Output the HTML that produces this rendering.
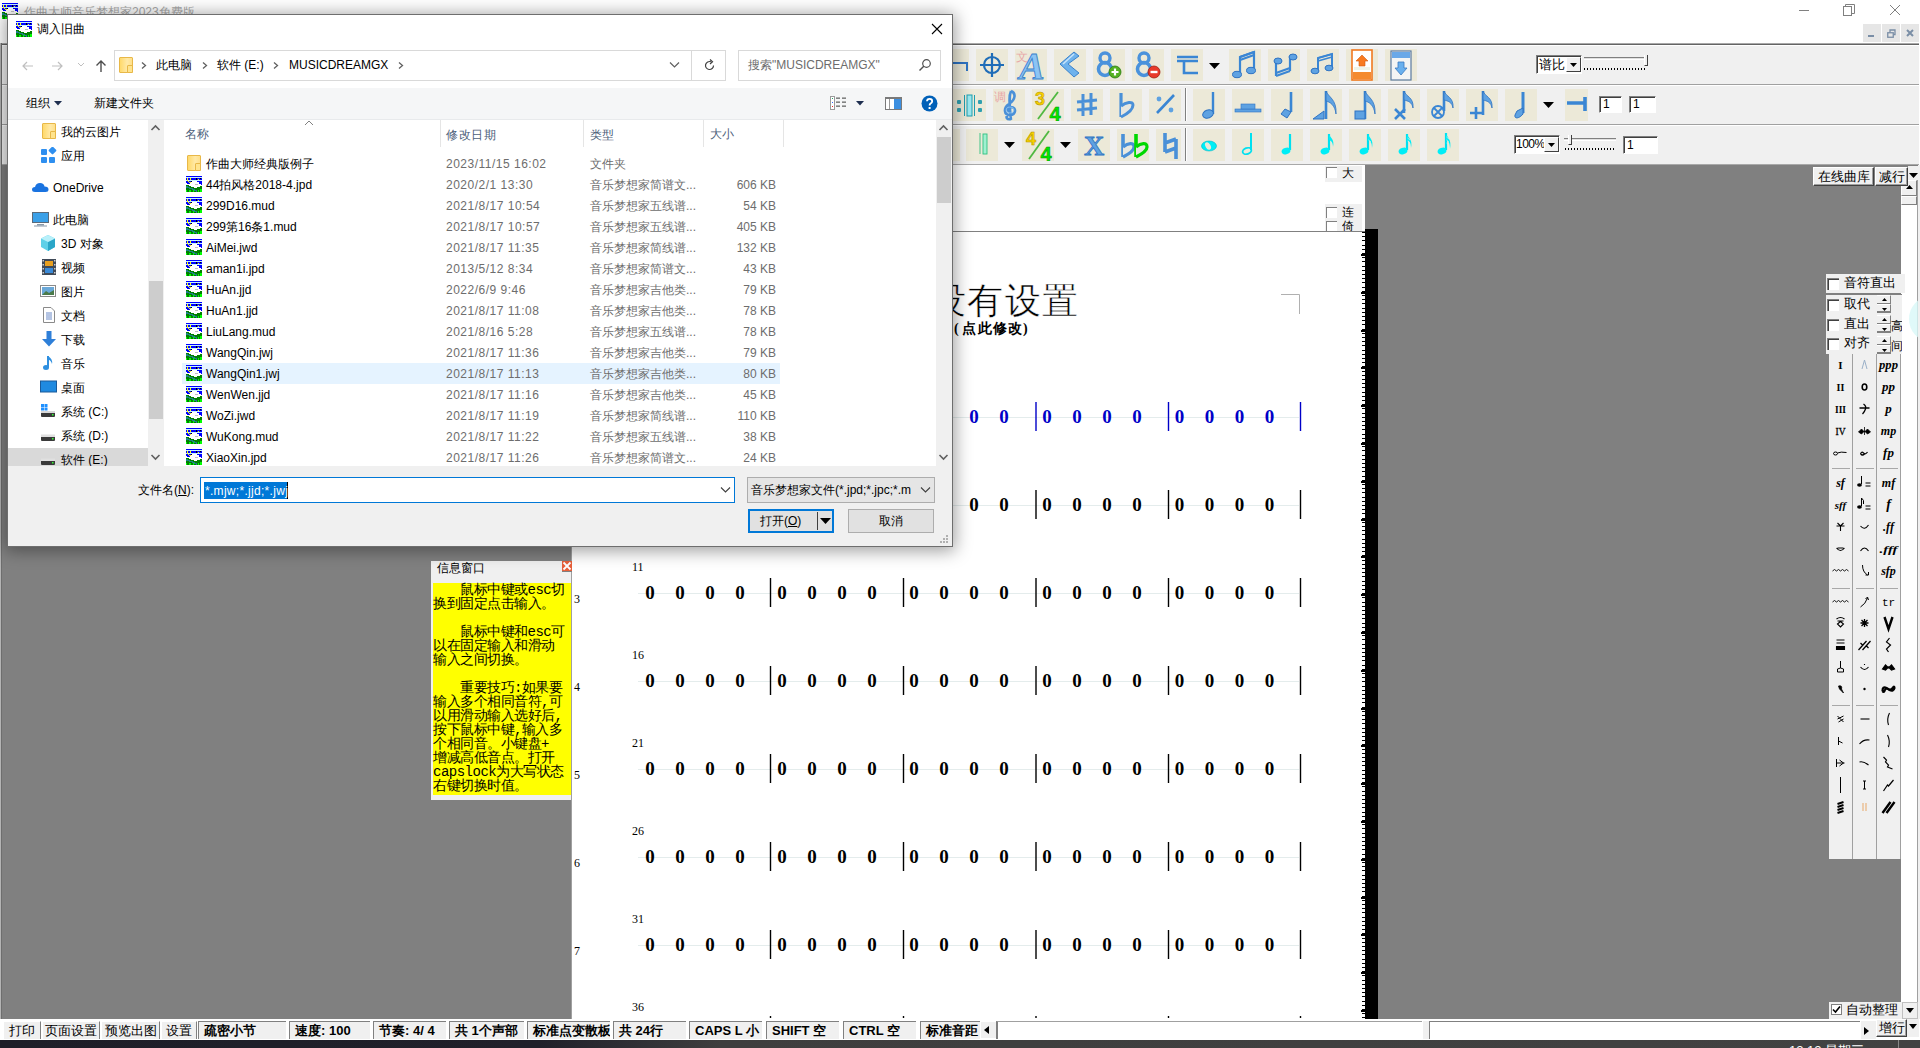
<!DOCTYPE html>
<html><head><meta charset="utf-8">
<style>
*{margin:0;padding:0;box-sizing:border-box}
body{width:1920px;height:1048px;overflow:hidden;position:relative;background:#fff;font-family:"Liberation Sans",sans-serif;color:#000}
.a{position:absolute}
.folder{width:14px;height:16px;background:linear-gradient(90deg,#ffd96a,#ffe9a8 60%,#ffe08a);border:1px solid #e8b848;border-radius:1px}.folder::after{content:"";position:absolute;right:-1px;bottom:-1px;width:4px;height:6px;background:#ffe48e;border:1px solid #e8b848;border-radius:1px}
.tb{position:absolute;width:32px;height:32px;background:#ece9d8}
</style></head><body>

<!-- APP TITLE BAR -->
<div class="a" style="left:0;top:0;width:1920px;height:43px;background:#fff"></div>
<div class="a" id="title" style="left:24px;top:4px;font-size:12px;line-height:16px;color:#a8a8a8;white-space:nowrap">作曲大师音乐梦想家2023免费版</div>

<!-- TOOLBAR -->
<div class="a" style="left:0;top:43px;width:1919px;height:122px;background:#f0f0f0"></div>
<div class="a" style="left:0;top:43px;width:1919px;height:1px;background:#a8a8a8"></div>
<div class="a" style="left:0;top:44px;width:1919px;height:1px;background:#646464"></div>
<div class="a" style="left:0;top:45px;width:1919px;height:1px;background:#fff"></div>
<div class="a" style="left:0;top:84px;width:1919px;height:1px;background:#a0a0a0"></div>
<div class="a" style="left:0;top:85px;width:1919px;height:1px;background:#fff"></div>
<div class="a" style="left:0;top:124px;width:1919px;height:1px;background:#a0a0a0"></div>
<div class="a" style="left:0;top:125px;width:1919px;height:1px;background:#fff"></div>
<div class="a" style="left:0;top:164px;width:1919px;height:1px;background:#a8a8a8"></div>

<!--TOOLBAR-START-->
<div class="a" style="left:0;top:0px;width:1920px;height:0">
<div class="tb" style="left:952px;top:49px;width:17px"><svg width="17" height="32"><path d="M0 14H15V22" stroke="#2f73c2" stroke-width="2" fill="none"/></svg></div>
<div class="tb" style="left:976px;top:49px;width:32px"><svg width="32" height="32" viewBox="0 0 32 32"><circle cx="16" cy="16" r="8" stroke="#1f6db8" stroke-width="2.2" fill="none"/><path d="M16 4V28M4 16H28" stroke="#1f6db8" stroke-width="2.2"/></svg></div>
<div class="tb" style="left:1015px;top:49px;width:32px"><svg width="32" height="32" viewBox="0 0 32 32"><text x="1" y="12" font-family="Liberation Serif, serif" font-size="12" fill="#e8a8a8">文</text><text x="17" y="30" text-anchor="middle" font-family="Liberation Serif, serif" font-size="38" font-style="italic" font-weight="bold" fill="#8cc4f4" stroke="#3a82cc" stroke-width="0.9">A</text></svg></div>
<div class="tb" style="left:1054px;top:49px;width:32px"><svg width="32" height="32" viewBox="0 0 32 32"><path d="M20 3L6 15L20 28L25 24L14 15L25 7Z" fill="#6eb2ec" stroke="#3a82cc" stroke-width="1"/><path d="M20 5L9 15" stroke="#c8e4fa" stroke-width="1.5"/></svg></div>
<div class="tb" style="left:1093px;top:49px;width:32px"><svg width="32" height="32" viewBox="0 0 32 32"><circle cx="12" cy="9" r="5" stroke="#4a92dc" stroke-width="3.4" fill="none"/><circle cx="12" cy="20" r="6.5" stroke="#4a92dc" stroke-width="3.6" fill="none"/><circle cx="22" cy="23" r="6" fill="#55b020" stroke="#2a7a10" stroke-width="0.8"/><path d="M22 19.5V26.5M18.5 23H25.5" stroke="#fff" stroke-width="2.2"/></svg></div>
<div class="tb" style="left:1132px;top:49px;width:32px"><svg width="32" height="32" viewBox="0 0 32 32"><circle cx="12" cy="9" r="5" stroke="#4a92dc" stroke-width="3.4" fill="none"/><circle cx="12" cy="20" r="6.5" stroke="#4a92dc" stroke-width="3.6" fill="none"/><circle cx="22" cy="23" r="6" fill="#e83a2a" stroke="#a02010" stroke-width="0.8"/><path d="M18.5 23H25.5" stroke="#fff" stroke-width="2.4"/></svg></div>
<div class="tb" style="left:1171px;top:49px;width:32px"><svg width="32" height="32" viewBox="0 0 32 32"><path d="M6 8H27M6 12H27M13 12V24H27" stroke="#3a86d4" stroke-width="2.6" fill="none"/></svg></div>
<div class="tb" style="left:1229px;top:49px;width:32px"><svg width="32" height="32" viewBox="0 0 32 32"><path d="M11 25V8L25 3V21" stroke="#3a86d4" stroke-width="2.2" fill="none"/><path d="M11 8L25 3M11 11L25 6" stroke="#3a86d4" stroke-width="2.2"/><ellipse cx="8" cy="25.5" rx="4.5" ry="3.2" fill="#5ea2e2" stroke="#2f73c2"/><ellipse cx="22" cy="21.5" rx="4.5" ry="3.2" fill="#5ea2e2" stroke="#2f73c2"/></svg></div>
<div class="tb" style="left:1268px;top:49px;width:32px"><svg width="32" height="32" viewBox="0 0 32 32"><path d="M8 27V12M22 22V7" stroke="#3a86d4" stroke-width="2.2"/><path d="M8 27L22 22M8 24L22 19" stroke="#3a86d4" stroke-width="2.2"/><ellipse cx="10" cy="12" rx="4" ry="3" fill="#5ea2e2" stroke="#2f73c2"/><ellipse cx="25" cy="8" rx="4" ry="3" fill="#5ea2e2" stroke="#2f73c2"/></svg></div>
<div class="tb" style="left:1307px;top:49px;width:32px"><svg width="32" height="32" viewBox="0 0 32 32"><path d="M11 22V9L25 5V19" stroke="#3a86d4" stroke-width="2" fill="none"/><path d="M11 9L25 5M11 12L25 8" stroke="#3a86d4" stroke-width="1.8"/><ellipse cx="8" cy="22" rx="4" ry="2.8" fill="#5ea2e2" stroke="#2f73c2"/><ellipse cx="22" cy="19" rx="4" ry="2.8" fill="#5ea2e2" stroke="#2f73c2"/></svg></div>
<div class="tb" style="left:1346px;top:49px;width:32px"><svg width="32" height="32" viewBox="0 0 32 32"><rect x="6" y="1" width="20" height="30" fill="#fff" stroke="#f07820" stroke-width="1.6"/><rect x="7" y="23" width="18" height="7" fill="#f58a30"/><path d="M16 6L22 12H19V17H13V12H10Z" fill="#f87a20" stroke="#d05a10" stroke-width="0.6"/><rect x="8" y="18" width="16" height="3" fill="#e8f0e0" opacity="0.7"/></svg></div>
<div class="tb" style="left:1385px;top:49px;width:32px"><svg width="32" height="32" viewBox="0 0 32 32"><rect x="6" y="2" width="20" height="29" fill="#f4f4f4" stroke="#5a7aa0" stroke-width="1.2"/><rect x="7" y="3" width="18" height="6" fill="#6aa8e8"/><path d="M13 13H19V19H22L16 26L10 19H13Z" fill="#6ab0ee" stroke="#3a7ac0" stroke-width="0.8"/></svg></div>
<svg class="a" style="left:1209px;top:63px" width="11" height="6" viewBox="0 0 11 6"><path d="M0 0H11L5.5 6Z" fill="#000"/></svg>
<div class="a" style="left:1536px;top:55px;width:46px;height:19px;background:#fff;border-top:1px solid #808080;border-left:1px solid #808080;border-right:1px solid #fff;border-bottom:1px solid #fff;box-shadow:inset 1px 1px 0 #404040"></div>
<div class="a" style="left:1539px;top:56px;font-size:13px;line-height:17px;white-space:nowrap">谱比</div>
<div class="a" style="left:1566px;top:57px;width:15px;height:15px;background:#f0f0f0;border-top:1px solid #fff;border-left:1px solid #fff;border-right:1px solid #404040;border-bottom:1px solid #404040"></div>
<svg class="a" style="left:1570px;top:63px" width="7" height="4"><path d="M0 0H7L3.5 4Z" fill="#000"/></svg>
<div class="a" style="left:1584px;top:57px;width:62px;height:3px;border-top:1px solid #808080;border-bottom:1px solid #fff;background:#e0e0e0"></div>
<div class="a" style="left:1584px;top:68px;width:62px;height:2px;background:repeating-linear-gradient(90deg,#000 0 1px,transparent 1px 3px)"></div>
<div class="a" style="left:1644px;top:55px;width:4px;height:11px;background:#f0f0f0;border-right:1px solid #404040;border-bottom:1px solid #404040;border-left:1px solid #fff"></div>
<div class="tb" style="left:952px;top:89px;width:34px"><svg width="34" height="32" viewBox="-2 0 34 32"><rect x="13" y="6" width="5" height="21" fill="#9be8f0" stroke="#20a0b0"/><path d="M10.5 6V27M20.5 6V27" stroke="#20a0b0" stroke-width="1"/><rect x="3" y="11" width="4" height="4" rx="1" fill="#30a0b0"/><rect x="3" y="19" width="4" height="4" rx="1" fill="#30a0b0"/><rect x="24" y="11" width="4" height="4" rx="1" fill="#30a0b0"/><rect x="24" y="19" width="4" height="4" rx="1" fill="#30a0b0"/></svg></div>
<div class="tb" style="left:993px;top:89px;width:32px"><svg width="32" height="32" viewBox="0 0 32 32"><text x="1" y="12" font-family="Liberation Serif, serif" font-size="12" fill="#e8a8a8">调</text><path d="M18 30C14 31 12 28 15 26M18 2C23 4 23 10 16 15C10 19 11 26 17 26C23 26 24 18 18 18C14 18 14 22 17 23M18 2C16 6 16 12 18 31" stroke="#4a90d8" stroke-width="2.6" fill="none"/><ellipse cx="17" cy="21" rx="4" ry="3" fill="none" stroke="#8cc4f4" stroke-width="0.8"/></svg></div>
<div class="tb" style="left:1032px;top:89px;width:32px"><svg width="32" height="32" viewBox="0 0 32 32"><text x="8" y="16" text-anchor="middle" font-family="Liberation Sans, sans-serif" font-weight="bold" font-size="18" fill="#f8d000" stroke="#b09000" stroke-width="0.5">3</text><path d="M6 30L26 3" stroke="#50b840" stroke-width="1.8"/><text x="23" y="32" text-anchor="middle" font-family="Liberation Sans, sans-serif" font-weight="bold" font-size="20" fill="#00e800" stroke="#009000" stroke-width="0.5">4</text></svg></div>
<div class="tb" style="left:1071px;top:89px;width:32px"><svg width="32" height="32" viewBox="0 0 32 32"><path d="M12 5V27M20 4V26M6 13L26 11M6 21L26 19" stroke="#4a90d8" stroke-width="3"/></svg></div>
<div class="tb" style="left:1110px;top:89px;width:32px"><svg width="32" height="32" viewBox="0 0 32 32"><path d="M11 4V28" stroke="#4a90d8" stroke-width="3.2"/><path d="M11 28C17 25 23 21 23 16C23 12 16 13 11 17" stroke="#4a90d8" stroke-width="3" fill="#e8e8e0"/></svg></div>
<div class="tb" style="left:1149px;top:89px;width:32px"><svg width="32" height="32" viewBox="0 0 32 32"><path d="M8 24L25 6" stroke="#3a86d4" stroke-width="2.6"/><circle cx="10" cy="10" r="2.4" fill="#5ea2e2"/><circle cx="22" cy="21" r="2.4" fill="#5ea2e2"/></svg></div>
<div class="tb" style="left:1193px;top:89px;width:32px"><svg width="32" height="32" viewBox="0 0 32 32"><path d="M20 3V25" stroke="#3a86d4" stroke-width="2.4"/><ellipse cx="15" cy="25" rx="5.5" ry="4" fill="#5ea2e2" stroke="#2f73c2" transform="rotate(-20 15 25)"/></svg></div>
<div class="tb" style="left:1232px;top:89px;width:32px"><svg width="32" height="32" viewBox="0 0 32 32"><rect x="3" y="20" width="26" height="3" fill="#5ea2e2" stroke="#2f73c2" stroke-width="0.6"/><rect x="9" y="15" width="14" height="5" fill="#5ea2e2" stroke="#2f73c2" stroke-width="0.6"/></svg></div>
<div class="tb" style="left:1271px;top:89px;width:32px"><svg width="32" height="32" viewBox="0 0 32 32"><path d="M20 3V23" stroke="#3a86d4" stroke-width="2.6"/><path d="M14 20L20 23L16 29L10 25Z" fill="#5ea2e2" stroke="#2f73c2"/></svg></div>
<div class="tb" style="left:1310px;top:89px;width:32px"><svg width="32" height="32" viewBox="0 0 32 32"><path d="M16 2V30" stroke="#3a86d4" stroke-width="2.6"/><path d="M16 2C18 8 27 10 26 25C25 16 20 13 16 12Z" fill="#5ea2e2" stroke="#2f73c2" stroke-width="0.8"/><path d="M3 30L14 22V30Z" fill="#5ea2e2" stroke="#2f73c2"/></svg></div>
<div class="tb" style="left:1349px;top:89px;width:32px"><svg width="32" height="32" viewBox="0 0 32 32"><path d="M16 2V30" stroke="#3a86d4" stroke-width="2.6"/><path d="M16 2C18 8 27 10 26 25C25 16 20 13 16 12Z" fill="#5ea2e2" stroke="#2f73c2" stroke-width="0.8"/><rect x="6" y="22" width="10" height="8" fill="#5ea2e2" stroke="#2f73c2"/></svg></div>
<div class="tb" style="left:1388px;top:89px;width:32px"><svg width="32" height="32" viewBox="0 0 32 32"><path d="M16 2V24" stroke="#3a86d4" stroke-width="2.6"/><path d="M16 2C18 8 26 8 25 19C24 13 20 12 16 11Z" fill="#5ea2e2" stroke="#2f73c2" stroke-width="0.8"/><path d="M7 20L17 30M17 20L7 30" stroke="#3a86d4" stroke-width="2.6"/></svg></div>
<div class="tb" style="left:1427px;top:89px;width:32px"><svg width="32" height="32" viewBox="0 0 32 32"><path d="M17 2V22" stroke="#3a86d4" stroke-width="2.6"/><path d="M17 2C19 8 27 8 26 19C25 13 21 12 17 11Z" fill="#5ea2e2" stroke="#2f73c2" stroke-width="0.8"/><circle cx="11" cy="23" r="6" fill="none" stroke="#3a86d4" stroke-width="1.8"/><path d="M7 19L15 27M15 19L7 27" stroke="#3a86d4" stroke-width="1.8"/></svg></div>
<div class="tb" style="left:1466px;top:89px;width:32px"><svg width="32" height="32" viewBox="0 0 32 32"><path d="M17 2V26" stroke="#3a86d4" stroke-width="2.6"/><path d="M17 2C19 8 27 8 26 19C25 13 21 12 17 11Z" fill="#5ea2e2" stroke="#2f73c2" stroke-width="0.8"/><path d="M4 24H16M10 18V30" stroke="#3a86d4" stroke-width="2.6"/></svg></div>
<div class="tb" style="left:1505px;top:89px;width:32px"><svg width="32" height="32" viewBox="0 0 32 32"><path d="M18 3V24" stroke="#3a86d4" stroke-width="3"/><path d="M18 19L18 25C14 30 9 30 10 26L12 22Z" fill="#5ea2e2" stroke="#2f73c2"/></svg></div>
<div class="a" style="left:1185px;top:88px;width:1px;height:33px;background:#808080;box-shadow:1px 0 0 #fff"></div>
<svg class="a" style="left:1543px;top:102px" width="11" height="6" viewBox="0 0 11 6"><path d="M0 0H11L5.5 6Z" fill="#000"/></svg>
<div class="tb" style="left:1565px;top:89px;width:23px"><svg width="23" height="32" viewBox="0 0 23 32"><path d="M2 14H20M20 8V22" stroke="#3a86d4" stroke-width="3.6"/></svg></div>
<div class="a" style="left:1599px;top:96px;width:23px;height:17px;background:#fff;border-top:1px solid #808080;border-left:1px solid #808080;border-right:1px solid #fff;border-bottom:1px solid #fff;box-shadow:inset 1px 1px 0 #404040;font-size:12px;line-height:15px;padding-left:3px">1</div>
<div class="a" style="left:1629px;top:96px;width:27px;height:17px;background:#fff;border-top:1px solid #808080;border-left:1px solid #808080;border-right:1px solid #fff;border-bottom:1px solid #fff;box-shadow:inset 1px 1px 0 #404040;font-size:12px;line-height:15px;padding-left:3px">1</div>
<div class="tb" style="left:952px;top:129px;width:8px"></div>
<div class="tb" style="left:966px;top:129px;width:32px"><svg width="32" height="32" viewBox="0 0 32 32"><path d="M14 4V25" stroke="#30c080" stroke-width="0.9"/><rect x="17" y="5" width="4" height="20" fill="#a0f0d0" stroke="#30c080" stroke-width="0.9"/></svg></div>
<div class="tb" style="left:1022px;top:129px;width:32px"><svg width="32" height="32" viewBox="0 0 32 32"><text x="9" y="16" text-anchor="middle" font-family="Liberation Sans, sans-serif" font-weight="bold" font-size="18" fill="#f8d000" stroke="#b09000" stroke-width="0.5">4</text><path d="M7 30L27 2" stroke="#50b840" stroke-width="1.8"/><text x="24" y="32" text-anchor="middle" font-family="Liberation Sans, sans-serif" font-weight="bold" font-size="20" fill="#00e800" stroke="#009000" stroke-width="0.5">4</text></svg></div>
<div class="tb" style="left:1078px;top:129px;width:32px"><svg width="32" height="32" viewBox="0 0 32 32"><text x="16" y="26" text-anchor="middle" font-family="Liberation Serif, serif" font-weight="bold" font-size="28" fill="#5ea2e2" stroke="#2f73c2" stroke-width="0.8">X</text></svg></div>
<div class="tb" style="left:1117px;top:129px;width:32px"><svg width="32" height="32" viewBox="0 0 32 32"><path d="M6 5V28" stroke="#4a90d8" stroke-width="3.6"/><path d="M6 28C12 25 17 22 17 18C17 13 11 14 6 18" stroke="#4a90d8" stroke-width="3.2" fill="#e8e8e0"/><path d="M19 5V28" stroke="#00d800" stroke-width="3.6"/><path d="M19 28C25 25 30 22 30 18C30 13 24 14 19 18" stroke="#00d800" stroke-width="3.2" fill="#e8e8e0"/></svg></div>
<div class="tb" style="left:1193px;top:129px;width:32px"><svg width="32" height="32" viewBox="0 0 32 32"><ellipse cx="16" cy="17" rx="7.5" ry="5" fill="#00eef6" stroke="#00b8c8" stroke-width="0.6"/><ellipse cx="15" cy="17" rx="2.5" ry="4" fill="#ece9d8" transform="rotate(-30 15 17)"/></svg></div>
<div class="tb" style="left:1232px;top:129px;width:32px"><svg width="32" height="32" viewBox="0 0 32 32"><path d="M19 4V21" stroke="#00e0f0" stroke-width="2"/><ellipse cx="15" cy="22" rx="4.5" ry="3" fill="none" stroke="#00e0f0" stroke-width="1.8" transform="rotate(-20 15 22)"/></svg></div>
<div class="tb" style="left:1271px;top:129px;width:32px"><svg width="32" height="32" viewBox="0 0 32 32"><path d="M19 5V21" stroke="#00e0f0" stroke-width="2.2"/><ellipse cx="15" cy="22" rx="4.5" ry="3.3" fill="#00eef6" transform="rotate(-20 15 22)"/></svg></div>
<div class="tb" style="left:1310px;top:129px;width:32px"><svg width="32" height="32" viewBox="0 0 32 32"><path d="M19 5V21" stroke="#00e0f0" stroke-width="2.2"/><path d="M19 5C20 9 25 10 23 18C23 13 21 12 19 11Z" fill="#00eef6"/><ellipse cx="15" cy="22" rx="4.5" ry="3.3" fill="#00eef6" transform="rotate(-20 15 22)"/></svg></div>
<div class="tb" style="left:1349px;top:129px;width:32px"><svg width="32" height="32" viewBox="0 0 32 32"><path d="M19 5V21" stroke="#00e0f0" stroke-width="2.2"/><path d="M19 5C20 9 25 10 23 19C23 13 21 12 19 11Z" fill="#00eef6"/><path d="M19.5 11L22 13" stroke="#ece9d8" stroke-width="0.8"/><ellipse cx="15" cy="22" rx="4.5" ry="3.3" fill="#00eef6" transform="rotate(-20 15 22)"/></svg></div>
<div class="tb" style="left:1388px;top:129px;width:32px"><svg width="32" height="32" viewBox="0 0 32 32"><path d="M19 5V21" stroke="#00e0f0" stroke-width="2.2"/><path d="M19 5C20 9 25 10 23 19C23 13 21 12 19 11Z" fill="#00eef6"/><path d="M19.5 9L22 11M19.5 12L22 14" stroke="#ece9d8" stroke-width="0.7"/><ellipse cx="15" cy="22" rx="4.5" ry="3.3" fill="#00eef6" transform="rotate(-20 15 22)"/></svg></div>
<div class="tb" style="left:1427px;top:129px;width:32px"><svg width="32" height="32" viewBox="0 0 32 32"><path d="M19 4V21" stroke="#00e0f0" stroke-width="2.2"/><path d="M19 4C20 9 25 10 23 20C23 13 21 12 19 11Z" fill="#00eef6"/><path d="M19.5 8L22 10M19.5 11L22 13M19.5 14L22 16" stroke="#ece9d8" stroke-width="0.7"/><ellipse cx="15" cy="22" rx="4.5" ry="3.3" fill="#00eef6" transform="rotate(-20 15 22)"/></svg></div>
<div class="tb" style="left:1156px;top:129px;width:25px"><svg width="25" height="32" viewBox="0 0 25 32"><path d="M9 4V23M20 10V30M9 23L20 19M9 14L20 10" stroke="#4a90d8" stroke-width="3.6"/></svg></div>
<svg class="a" style="left:1004px;top:142px" width="11" height="6" viewBox="0 0 11 6"><path d="M0 0H11L5.5 6Z" fill="#000"/></svg>
<svg class="a" style="left:1060px;top:142px" width="11" height="6" viewBox="0 0 11 6"><path d="M0 0H11L5.5 6Z" fill="#000"/></svg>
<div class="a" style="left:1185px;top:128px;width:1px;height:33px;background:#808080;box-shadow:1px 0 0 #fff"></div>
<div class="a" style="left:1514px;top:135px;width:46px;height:19px;background:#fff;border-top:1px solid #808080;border-left:1px solid #808080;border-right:1px solid #fff;border-bottom:1px solid #fff;box-shadow:inset 1px 1px 0 #404040"></div>
<div class="a" style="left:1516px;top:136px;font-size:12px;line-height:17px;white-space:nowrap;letter-spacing:-0.5px">100%</div>
<div class="a" style="left:1544px;top:137px;width:15px;height:15px;background:#f0f0f0;border-top:1px solid #fff;border-left:1px solid #fff;border-right:1px solid #404040;border-bottom:1px solid #404040"></div>
<svg class="a" style="left:1548px;top:143px" width="7" height="4"><path d="M0 0H7L3.5 4Z" fill="#000"/></svg>
<div class="a" style="left:1564px;top:138px;width:52px;height:3px;border-top:1px solid #808080;border-bottom:1px solid #fff;background:#e0e0e0"></div>
<div class="a" style="left:1565px;top:148px;width:51px;height:2px;background:repeating-linear-gradient(90deg,#000 0 1px,transparent 1px 3px)"></div>
<div class="a" style="left:1568px;top:135px;width:4px;height:10px;background:#f0f0f0;border-right:1px solid #404040;border-bottom:1px solid #404040;border-left:1px solid #fff"></div>
<div class="a" style="left:1623px;top:136px;width:35px;height:18px;background:#fff;border-top:1px solid #808080;border-left:1px solid #808080;border-right:1px solid #fff;border-bottom:1px solid #fff;box-shadow:inset 1px 1px 0 #404040;font-size:12px;line-height:16px;padding-left:3px">1</div>
</div>
<svg class="a" style="left:2px;top:3px" width="16" height="16" viewBox="0 0 16 16" shape-rendering="crispEdges"><rect width="16" height="16" fill="#fff"/><rect y="0" width="16" height="1" fill="#0000ff"/><rect y="1" width="16" height="1" fill="#c8f4ff"/><rect y="2" width="16" height="2" fill="#0000ff"/><rect y="4" width="16" height="1" fill="#c8f4ff"/><path d="M0 5H5V7H4V8H1V7H0Z" fill="#0000ff"/><path d="M11 5H16V9H15V8H13V6H11Z" fill="#0000ff"/><path d="M1 2H2V5H1ZM4 2H5V4H4ZM2 5H3V6H2ZM12 3H13V4H12ZM3 6H5V7H3Z" fill="#ffff00"/><path d="M10 2H11V4H10ZM14 2H15V3H14ZM5 5H6V6H5Z" fill="#000"/><path d="M0 9H3V10H5V11H8V12H11V11H14V10H16V16H0Z" fill="#008000"/><path d="M0 10H2V11H4V12H7V13H9V14H11V16H10V15H8V14H6V13H3V12H0Z" fill="#20808a"/><path d="M0 14H1V16H0ZM3 14H5V16H3ZM7 14H8V16H7ZM12 14H13V16H12ZM14 13H16V16H14Z" fill="#00ff00"/><rect x="9" y="8" width="3" height="1" fill="#c0c0c0"/></svg>
<div class="a" style="left:1799px;top:10px;width:10px;height:1px;background:#808080"></div>
<svg class="a" style="left:1843px;top:4px" width="12" height="12" viewBox="0 0 12 12"><rect x="0.5" y="2.5" width="8" height="9" fill="none" stroke="#808080"/><path d="M2.5 2.5V0.5H11.5V9.5H8.5" fill="none" stroke="#808080"/></svg>
<svg class="a" style="left:1889px;top:4px" width="12" height="12" viewBox="0 0 12 12"><path d="M1 1L11 11M11 1L1 11" stroke="#808080" stroke-width="1"/></svg>
<div class="a" style="left:1863px;top:24px;width:18px;height:18px;background:#e6e6e6"></div>
<div class="a" style="left:1882px;top:24px;width:18px;height:18px;background:#e6e6e6"></div>
<div class="a" style="left:1901px;top:24px;width:18px;height:18px;background:#e6e6e6"></div>
<div class="a" style="left:1868px;top:35px;width:6px;height:2px;background:#7a8ea6"></div>
<svg class="a" style="left:1887px;top:29px" width="9" height="9" viewBox="0 0 9 9"><rect x="0.75" y="3.75" width="5.5" height="4.5" fill="none" stroke="#7a8ea6" stroke-width="1.3"/><path d="M3 3.5V1H8V5.5H6.5" fill="none" stroke="#7a8ea6" stroke-width="1.3"/></svg>
<svg class="a" style="left:1906px;top:29px" width="8" height="8" viewBox="0 0 8 8"><path d="M1 1L7 7M7 1L1 7" stroke="#7a8ea6" stroke-width="2"/></svg>
<!--TOOLBAR-END-->
<!-- MAIN GRAY -->
<div class="a" style="left:0;top:165px;width:1920px;height:854px;background:#808080"></div>

<!-- SCORE PAGE -->
<div class="a" style="left:571px;top:165px;width:795px;height:854px;background:#fff;border-left:1px solid #a0a0a0;border-right:1px solid #808080"></div>
<div class="a" style="left:571px;top:231px;width:795px;height:1px;background:#808080"></div>
<div class="a" style="left:1365px;top:229px;width:13px;height:790px;background:#000"></div>

<div class="a" style="left:0;top:43px;width:1px;height:997px;background:#b4b4b4"></div><div class="a" style="left:1px;top:43px;width:1px;height:997px;background:#6e6e6e"></div>
<!-- STATUS BAR -->
<div class="a" style="left:0;top:1019px;width:1920px;height:21px;background:#fff"></div>
<svg class="a" style="left:572px;top:165px" width="793" height="854" viewBox="572 165 793 854">
<text y="313" font-family="Liberation Serif, serif" font-size="36" fill="#000" stroke="#fff" stroke-width="0.5"><tspan x="856 893 930 967 1005 1042">标题没有设置</tspan></text>
<text y="333" font-family="Liberation Serif, serif" font-size="14" font-weight="bold" fill="#000"><tspan x="954 962 978 993 1008 1023">(点此修改)</tspan></text>
<path d="M1281 294.5H1299.5V314" stroke="#b0b0b0" stroke-width="1" fill="none"/>
<line x1="638" y1="417.5" x2="1299" y2="417.5" stroke="#e4ecec" stroke-width="1"/>
<rect x="769.8" y="402" width="1.4" height="29" fill="#0000c8"/>
<rect x="902.8" y="402" width="1.4" height="29" fill="#0000c8"/>
<rect x="1035.3" y="402" width="1.4" height="29" fill="#0000c8"/>
<rect x="1167.8" y="402" width="1.4" height="29" fill="#0000c8"/>
<rect x="1299.8" y="402" width="1.4" height="29" fill="#0000c8"/>
<text x="650.0" y="423" text-anchor="middle" textLength="9.5" lengthAdjust="spacingAndGlyphs" font-family="Liberation Serif, serif" font-size="19" font-weight="bold" fill="#0000c8">0</text>
<text x="680.0" y="423" text-anchor="middle" textLength="9.5" lengthAdjust="spacingAndGlyphs" font-family="Liberation Serif, serif" font-size="19" font-weight="bold" fill="#0000c8">0</text>
<text x="710.0" y="423" text-anchor="middle" textLength="9.5" lengthAdjust="spacingAndGlyphs" font-family="Liberation Serif, serif" font-size="19" font-weight="bold" fill="#0000c8">0</text>
<text x="740.0" y="423" text-anchor="middle" textLength="9.5" lengthAdjust="spacingAndGlyphs" font-family="Liberation Serif, serif" font-size="19" font-weight="bold" fill="#0000c8">0</text>
<text x="782.0" y="423" text-anchor="middle" textLength="9.5" lengthAdjust="spacingAndGlyphs" font-family="Liberation Serif, serif" font-size="19" font-weight="bold" fill="#0000c8">0</text>
<text x="812.0" y="423" text-anchor="middle" textLength="9.5" lengthAdjust="spacingAndGlyphs" font-family="Liberation Serif, serif" font-size="19" font-weight="bold" fill="#0000c8">0</text>
<text x="842.0" y="423" text-anchor="middle" textLength="9.5" lengthAdjust="spacingAndGlyphs" font-family="Liberation Serif, serif" font-size="19" font-weight="bold" fill="#0000c8">0</text>
<text x="872.0" y="423" text-anchor="middle" textLength="9.5" lengthAdjust="spacingAndGlyphs" font-family="Liberation Serif, serif" font-size="19" font-weight="bold" fill="#0000c8">0</text>
<text x="914.0" y="423" text-anchor="middle" textLength="9.5" lengthAdjust="spacingAndGlyphs" font-family="Liberation Serif, serif" font-size="19" font-weight="bold" fill="#0000c8">0</text>
<text x="944.0" y="423" text-anchor="middle" textLength="9.5" lengthAdjust="spacingAndGlyphs" font-family="Liberation Serif, serif" font-size="19" font-weight="bold" fill="#0000c8">0</text>
<text x="974.0" y="423" text-anchor="middle" textLength="9.5" lengthAdjust="spacingAndGlyphs" font-family="Liberation Serif, serif" font-size="19" font-weight="bold" fill="#0000c8">0</text>
<text x="1004.0" y="423" text-anchor="middle" textLength="9.5" lengthAdjust="spacingAndGlyphs" font-family="Liberation Serif, serif" font-size="19" font-weight="bold" fill="#0000c8">0</text>
<text x="1047.0" y="423" text-anchor="middle" textLength="9.5" lengthAdjust="spacingAndGlyphs" font-family="Liberation Serif, serif" font-size="19" font-weight="bold" fill="#0000c8">0</text>
<text x="1077.0" y="423" text-anchor="middle" textLength="9.5" lengthAdjust="spacingAndGlyphs" font-family="Liberation Serif, serif" font-size="19" font-weight="bold" fill="#0000c8">0</text>
<text x="1107.0" y="423" text-anchor="middle" textLength="9.5" lengthAdjust="spacingAndGlyphs" font-family="Liberation Serif, serif" font-size="19" font-weight="bold" fill="#0000c8">0</text>
<text x="1137.0" y="423" text-anchor="middle" textLength="9.5" lengthAdjust="spacingAndGlyphs" font-family="Liberation Serif, serif" font-size="19" font-weight="bold" fill="#0000c8">0</text>
<text x="1179.5" y="423" text-anchor="middle" textLength="9.5" lengthAdjust="spacingAndGlyphs" font-family="Liberation Serif, serif" font-size="19" font-weight="bold" fill="#0000c8">0</text>
<text x="1209.5" y="423" text-anchor="middle" textLength="9.5" lengthAdjust="spacingAndGlyphs" font-family="Liberation Serif, serif" font-size="19" font-weight="bold" fill="#0000c8">0</text>
<text x="1239.5" y="423" text-anchor="middle" textLength="9.5" lengthAdjust="spacingAndGlyphs" font-family="Liberation Serif, serif" font-size="19" font-weight="bold" fill="#0000c8">0</text>
<text x="1269.5" y="423" text-anchor="middle" textLength="9.5" lengthAdjust="spacingAndGlyphs" font-family="Liberation Serif, serif" font-size="19" font-weight="bold" fill="#0000c8">0</text>
<line x1="638" y1="505.5" x2="1299" y2="505.5" stroke="#e4ecec" stroke-width="1"/>
<rect x="769.8" y="490" width="1.4" height="29" fill="#000"/>
<rect x="902.8" y="490" width="1.4" height="29" fill="#000"/>
<rect x="1035.3" y="490" width="1.4" height="29" fill="#000"/>
<rect x="1167.8" y="490" width="1.4" height="29" fill="#000"/>
<rect x="1299.8" y="490" width="1.4" height="29" fill="#000"/>
<text x="650.0" y="511" text-anchor="middle" textLength="9.5" lengthAdjust="spacingAndGlyphs" font-family="Liberation Serif, serif" font-size="19" font-weight="bold" fill="#000">0</text>
<text x="680.0" y="511" text-anchor="middle" textLength="9.5" lengthAdjust="spacingAndGlyphs" font-family="Liberation Serif, serif" font-size="19" font-weight="bold" fill="#000">0</text>
<text x="710.0" y="511" text-anchor="middle" textLength="9.5" lengthAdjust="spacingAndGlyphs" font-family="Liberation Serif, serif" font-size="19" font-weight="bold" fill="#000">0</text>
<text x="740.0" y="511" text-anchor="middle" textLength="9.5" lengthAdjust="spacingAndGlyphs" font-family="Liberation Serif, serif" font-size="19" font-weight="bold" fill="#000">0</text>
<text x="782.0" y="511" text-anchor="middle" textLength="9.5" lengthAdjust="spacingAndGlyphs" font-family="Liberation Serif, serif" font-size="19" font-weight="bold" fill="#000">0</text>
<text x="812.0" y="511" text-anchor="middle" textLength="9.5" lengthAdjust="spacingAndGlyphs" font-family="Liberation Serif, serif" font-size="19" font-weight="bold" fill="#000">0</text>
<text x="842.0" y="511" text-anchor="middle" textLength="9.5" lengthAdjust="spacingAndGlyphs" font-family="Liberation Serif, serif" font-size="19" font-weight="bold" fill="#000">0</text>
<text x="872.0" y="511" text-anchor="middle" textLength="9.5" lengthAdjust="spacingAndGlyphs" font-family="Liberation Serif, serif" font-size="19" font-weight="bold" fill="#000">0</text>
<text x="914.0" y="511" text-anchor="middle" textLength="9.5" lengthAdjust="spacingAndGlyphs" font-family="Liberation Serif, serif" font-size="19" font-weight="bold" fill="#000">0</text>
<text x="944.0" y="511" text-anchor="middle" textLength="9.5" lengthAdjust="spacingAndGlyphs" font-family="Liberation Serif, serif" font-size="19" font-weight="bold" fill="#000">0</text>
<text x="974.0" y="511" text-anchor="middle" textLength="9.5" lengthAdjust="spacingAndGlyphs" font-family="Liberation Serif, serif" font-size="19" font-weight="bold" fill="#000">0</text>
<text x="1004.0" y="511" text-anchor="middle" textLength="9.5" lengthAdjust="spacingAndGlyphs" font-family="Liberation Serif, serif" font-size="19" font-weight="bold" fill="#000">0</text>
<text x="1047.0" y="511" text-anchor="middle" textLength="9.5" lengthAdjust="spacingAndGlyphs" font-family="Liberation Serif, serif" font-size="19" font-weight="bold" fill="#000">0</text>
<text x="1077.0" y="511" text-anchor="middle" textLength="9.5" lengthAdjust="spacingAndGlyphs" font-family="Liberation Serif, serif" font-size="19" font-weight="bold" fill="#000">0</text>
<text x="1107.0" y="511" text-anchor="middle" textLength="9.5" lengthAdjust="spacingAndGlyphs" font-family="Liberation Serif, serif" font-size="19" font-weight="bold" fill="#000">0</text>
<text x="1137.0" y="511" text-anchor="middle" textLength="9.5" lengthAdjust="spacingAndGlyphs" font-family="Liberation Serif, serif" font-size="19" font-weight="bold" fill="#000">0</text>
<text x="1179.5" y="511" text-anchor="middle" textLength="9.5" lengthAdjust="spacingAndGlyphs" font-family="Liberation Serif, serif" font-size="19" font-weight="bold" fill="#000">0</text>
<text x="1209.5" y="511" text-anchor="middle" textLength="9.5" lengthAdjust="spacingAndGlyphs" font-family="Liberation Serif, serif" font-size="19" font-weight="bold" fill="#000">0</text>
<text x="1239.5" y="511" text-anchor="middle" textLength="9.5" lengthAdjust="spacingAndGlyphs" font-family="Liberation Serif, serif" font-size="19" font-weight="bold" fill="#000">0</text>
<text x="1269.5" y="511" text-anchor="middle" textLength="9.5" lengthAdjust="spacingAndGlyphs" font-family="Liberation Serif, serif" font-size="19" font-weight="bold" fill="#000">0</text>
<line x1="638" y1="593.5" x2="1299" y2="593.5" stroke="#e4ecec" stroke-width="1"/>
<rect x="769.8" y="578" width="1.4" height="29" fill="#000"/>
<rect x="902.8" y="578" width="1.4" height="29" fill="#000"/>
<rect x="1035.3" y="578" width="1.4" height="29" fill="#000"/>
<rect x="1167.8" y="578" width="1.4" height="29" fill="#000"/>
<rect x="1299.8" y="578" width="1.4" height="29" fill="#000"/>
<text x="650.0" y="599" text-anchor="middle" textLength="9.5" lengthAdjust="spacingAndGlyphs" font-family="Liberation Serif, serif" font-size="19" font-weight="bold" fill="#000">0</text>
<text x="680.0" y="599" text-anchor="middle" textLength="9.5" lengthAdjust="spacingAndGlyphs" font-family="Liberation Serif, serif" font-size="19" font-weight="bold" fill="#000">0</text>
<text x="710.0" y="599" text-anchor="middle" textLength="9.5" lengthAdjust="spacingAndGlyphs" font-family="Liberation Serif, serif" font-size="19" font-weight="bold" fill="#000">0</text>
<text x="740.0" y="599" text-anchor="middle" textLength="9.5" lengthAdjust="spacingAndGlyphs" font-family="Liberation Serif, serif" font-size="19" font-weight="bold" fill="#000">0</text>
<text x="782.0" y="599" text-anchor="middle" textLength="9.5" lengthAdjust="spacingAndGlyphs" font-family="Liberation Serif, serif" font-size="19" font-weight="bold" fill="#000">0</text>
<text x="812.0" y="599" text-anchor="middle" textLength="9.5" lengthAdjust="spacingAndGlyphs" font-family="Liberation Serif, serif" font-size="19" font-weight="bold" fill="#000">0</text>
<text x="842.0" y="599" text-anchor="middle" textLength="9.5" lengthAdjust="spacingAndGlyphs" font-family="Liberation Serif, serif" font-size="19" font-weight="bold" fill="#000">0</text>
<text x="872.0" y="599" text-anchor="middle" textLength="9.5" lengthAdjust="spacingAndGlyphs" font-family="Liberation Serif, serif" font-size="19" font-weight="bold" fill="#000">0</text>
<text x="914.0" y="599" text-anchor="middle" textLength="9.5" lengthAdjust="spacingAndGlyphs" font-family="Liberation Serif, serif" font-size="19" font-weight="bold" fill="#000">0</text>
<text x="944.0" y="599" text-anchor="middle" textLength="9.5" lengthAdjust="spacingAndGlyphs" font-family="Liberation Serif, serif" font-size="19" font-weight="bold" fill="#000">0</text>
<text x="974.0" y="599" text-anchor="middle" textLength="9.5" lengthAdjust="spacingAndGlyphs" font-family="Liberation Serif, serif" font-size="19" font-weight="bold" fill="#000">0</text>
<text x="1004.0" y="599" text-anchor="middle" textLength="9.5" lengthAdjust="spacingAndGlyphs" font-family="Liberation Serif, serif" font-size="19" font-weight="bold" fill="#000">0</text>
<text x="1047.0" y="599" text-anchor="middle" textLength="9.5" lengthAdjust="spacingAndGlyphs" font-family="Liberation Serif, serif" font-size="19" font-weight="bold" fill="#000">0</text>
<text x="1077.0" y="599" text-anchor="middle" textLength="9.5" lengthAdjust="spacingAndGlyphs" font-family="Liberation Serif, serif" font-size="19" font-weight="bold" fill="#000">0</text>
<text x="1107.0" y="599" text-anchor="middle" textLength="9.5" lengthAdjust="spacingAndGlyphs" font-family="Liberation Serif, serif" font-size="19" font-weight="bold" fill="#000">0</text>
<text x="1137.0" y="599" text-anchor="middle" textLength="9.5" lengthAdjust="spacingAndGlyphs" font-family="Liberation Serif, serif" font-size="19" font-weight="bold" fill="#000">0</text>
<text x="1179.5" y="599" text-anchor="middle" textLength="9.5" lengthAdjust="spacingAndGlyphs" font-family="Liberation Serif, serif" font-size="19" font-weight="bold" fill="#000">0</text>
<text x="1209.5" y="599" text-anchor="middle" textLength="9.5" lengthAdjust="spacingAndGlyphs" font-family="Liberation Serif, serif" font-size="19" font-weight="bold" fill="#000">0</text>
<text x="1239.5" y="599" text-anchor="middle" textLength="9.5" lengthAdjust="spacingAndGlyphs" font-family="Liberation Serif, serif" font-size="19" font-weight="bold" fill="#000">0</text>
<text x="1269.5" y="599" text-anchor="middle" textLength="9.5" lengthAdjust="spacingAndGlyphs" font-family="Liberation Serif, serif" font-size="19" font-weight="bold" fill="#000">0</text>
<text x="632" y="571" font-family="Liberation Serif, serif" font-size="12" fill="#000">11</text>
<text x="574" y="603" font-family="Liberation Serif, serif" font-size="12" fill="#000">3</text>
<line x1="638" y1="681.5" x2="1299" y2="681.5" stroke="#e4ecec" stroke-width="1"/>
<rect x="769.8" y="666" width="1.4" height="29" fill="#000"/>
<rect x="902.8" y="666" width="1.4" height="29" fill="#000"/>
<rect x="1035.3" y="666" width="1.4" height="29" fill="#000"/>
<rect x="1167.8" y="666" width="1.4" height="29" fill="#000"/>
<rect x="1299.8" y="666" width="1.4" height="29" fill="#000"/>
<text x="650.0" y="687" text-anchor="middle" textLength="9.5" lengthAdjust="spacingAndGlyphs" font-family="Liberation Serif, serif" font-size="19" font-weight="bold" fill="#000">0</text>
<text x="680.0" y="687" text-anchor="middle" textLength="9.5" lengthAdjust="spacingAndGlyphs" font-family="Liberation Serif, serif" font-size="19" font-weight="bold" fill="#000">0</text>
<text x="710.0" y="687" text-anchor="middle" textLength="9.5" lengthAdjust="spacingAndGlyphs" font-family="Liberation Serif, serif" font-size="19" font-weight="bold" fill="#000">0</text>
<text x="740.0" y="687" text-anchor="middle" textLength="9.5" lengthAdjust="spacingAndGlyphs" font-family="Liberation Serif, serif" font-size="19" font-weight="bold" fill="#000">0</text>
<text x="782.0" y="687" text-anchor="middle" textLength="9.5" lengthAdjust="spacingAndGlyphs" font-family="Liberation Serif, serif" font-size="19" font-weight="bold" fill="#000">0</text>
<text x="812.0" y="687" text-anchor="middle" textLength="9.5" lengthAdjust="spacingAndGlyphs" font-family="Liberation Serif, serif" font-size="19" font-weight="bold" fill="#000">0</text>
<text x="842.0" y="687" text-anchor="middle" textLength="9.5" lengthAdjust="spacingAndGlyphs" font-family="Liberation Serif, serif" font-size="19" font-weight="bold" fill="#000">0</text>
<text x="872.0" y="687" text-anchor="middle" textLength="9.5" lengthAdjust="spacingAndGlyphs" font-family="Liberation Serif, serif" font-size="19" font-weight="bold" fill="#000">0</text>
<text x="914.0" y="687" text-anchor="middle" textLength="9.5" lengthAdjust="spacingAndGlyphs" font-family="Liberation Serif, serif" font-size="19" font-weight="bold" fill="#000">0</text>
<text x="944.0" y="687" text-anchor="middle" textLength="9.5" lengthAdjust="spacingAndGlyphs" font-family="Liberation Serif, serif" font-size="19" font-weight="bold" fill="#000">0</text>
<text x="974.0" y="687" text-anchor="middle" textLength="9.5" lengthAdjust="spacingAndGlyphs" font-family="Liberation Serif, serif" font-size="19" font-weight="bold" fill="#000">0</text>
<text x="1004.0" y="687" text-anchor="middle" textLength="9.5" lengthAdjust="spacingAndGlyphs" font-family="Liberation Serif, serif" font-size="19" font-weight="bold" fill="#000">0</text>
<text x="1047.0" y="687" text-anchor="middle" textLength="9.5" lengthAdjust="spacingAndGlyphs" font-family="Liberation Serif, serif" font-size="19" font-weight="bold" fill="#000">0</text>
<text x="1077.0" y="687" text-anchor="middle" textLength="9.5" lengthAdjust="spacingAndGlyphs" font-family="Liberation Serif, serif" font-size="19" font-weight="bold" fill="#000">0</text>
<text x="1107.0" y="687" text-anchor="middle" textLength="9.5" lengthAdjust="spacingAndGlyphs" font-family="Liberation Serif, serif" font-size="19" font-weight="bold" fill="#000">0</text>
<text x="1137.0" y="687" text-anchor="middle" textLength="9.5" lengthAdjust="spacingAndGlyphs" font-family="Liberation Serif, serif" font-size="19" font-weight="bold" fill="#000">0</text>
<text x="1179.5" y="687" text-anchor="middle" textLength="9.5" lengthAdjust="spacingAndGlyphs" font-family="Liberation Serif, serif" font-size="19" font-weight="bold" fill="#000">0</text>
<text x="1209.5" y="687" text-anchor="middle" textLength="9.5" lengthAdjust="spacingAndGlyphs" font-family="Liberation Serif, serif" font-size="19" font-weight="bold" fill="#000">0</text>
<text x="1239.5" y="687" text-anchor="middle" textLength="9.5" lengthAdjust="spacingAndGlyphs" font-family="Liberation Serif, serif" font-size="19" font-weight="bold" fill="#000">0</text>
<text x="1269.5" y="687" text-anchor="middle" textLength="9.5" lengthAdjust="spacingAndGlyphs" font-family="Liberation Serif, serif" font-size="19" font-weight="bold" fill="#000">0</text>
<text x="632" y="659" font-family="Liberation Serif, serif" font-size="12" fill="#000">16</text>
<text x="574" y="691" font-family="Liberation Serif, serif" font-size="12" fill="#000">4</text>
<line x1="638" y1="769.5" x2="1299" y2="769.5" stroke="#e4ecec" stroke-width="1"/>
<rect x="769.8" y="754" width="1.4" height="29" fill="#000"/>
<rect x="902.8" y="754" width="1.4" height="29" fill="#000"/>
<rect x="1035.3" y="754" width="1.4" height="29" fill="#000"/>
<rect x="1167.8" y="754" width="1.4" height="29" fill="#000"/>
<rect x="1299.8" y="754" width="1.4" height="29" fill="#000"/>
<text x="650.0" y="775" text-anchor="middle" textLength="9.5" lengthAdjust="spacingAndGlyphs" font-family="Liberation Serif, serif" font-size="19" font-weight="bold" fill="#000">0</text>
<text x="680.0" y="775" text-anchor="middle" textLength="9.5" lengthAdjust="spacingAndGlyphs" font-family="Liberation Serif, serif" font-size="19" font-weight="bold" fill="#000">0</text>
<text x="710.0" y="775" text-anchor="middle" textLength="9.5" lengthAdjust="spacingAndGlyphs" font-family="Liberation Serif, serif" font-size="19" font-weight="bold" fill="#000">0</text>
<text x="740.0" y="775" text-anchor="middle" textLength="9.5" lengthAdjust="spacingAndGlyphs" font-family="Liberation Serif, serif" font-size="19" font-weight="bold" fill="#000">0</text>
<text x="782.0" y="775" text-anchor="middle" textLength="9.5" lengthAdjust="spacingAndGlyphs" font-family="Liberation Serif, serif" font-size="19" font-weight="bold" fill="#000">0</text>
<text x="812.0" y="775" text-anchor="middle" textLength="9.5" lengthAdjust="spacingAndGlyphs" font-family="Liberation Serif, serif" font-size="19" font-weight="bold" fill="#000">0</text>
<text x="842.0" y="775" text-anchor="middle" textLength="9.5" lengthAdjust="spacingAndGlyphs" font-family="Liberation Serif, serif" font-size="19" font-weight="bold" fill="#000">0</text>
<text x="872.0" y="775" text-anchor="middle" textLength="9.5" lengthAdjust="spacingAndGlyphs" font-family="Liberation Serif, serif" font-size="19" font-weight="bold" fill="#000">0</text>
<text x="914.0" y="775" text-anchor="middle" textLength="9.5" lengthAdjust="spacingAndGlyphs" font-family="Liberation Serif, serif" font-size="19" font-weight="bold" fill="#000">0</text>
<text x="944.0" y="775" text-anchor="middle" textLength="9.5" lengthAdjust="spacingAndGlyphs" font-family="Liberation Serif, serif" font-size="19" font-weight="bold" fill="#000">0</text>
<text x="974.0" y="775" text-anchor="middle" textLength="9.5" lengthAdjust="spacingAndGlyphs" font-family="Liberation Serif, serif" font-size="19" font-weight="bold" fill="#000">0</text>
<text x="1004.0" y="775" text-anchor="middle" textLength="9.5" lengthAdjust="spacingAndGlyphs" font-family="Liberation Serif, serif" font-size="19" font-weight="bold" fill="#000">0</text>
<text x="1047.0" y="775" text-anchor="middle" textLength="9.5" lengthAdjust="spacingAndGlyphs" font-family="Liberation Serif, serif" font-size="19" font-weight="bold" fill="#000">0</text>
<text x="1077.0" y="775" text-anchor="middle" textLength="9.5" lengthAdjust="spacingAndGlyphs" font-family="Liberation Serif, serif" font-size="19" font-weight="bold" fill="#000">0</text>
<text x="1107.0" y="775" text-anchor="middle" textLength="9.5" lengthAdjust="spacingAndGlyphs" font-family="Liberation Serif, serif" font-size="19" font-weight="bold" fill="#000">0</text>
<text x="1137.0" y="775" text-anchor="middle" textLength="9.5" lengthAdjust="spacingAndGlyphs" font-family="Liberation Serif, serif" font-size="19" font-weight="bold" fill="#000">0</text>
<text x="1179.5" y="775" text-anchor="middle" textLength="9.5" lengthAdjust="spacingAndGlyphs" font-family="Liberation Serif, serif" font-size="19" font-weight="bold" fill="#000">0</text>
<text x="1209.5" y="775" text-anchor="middle" textLength="9.5" lengthAdjust="spacingAndGlyphs" font-family="Liberation Serif, serif" font-size="19" font-weight="bold" fill="#000">0</text>
<text x="1239.5" y="775" text-anchor="middle" textLength="9.5" lengthAdjust="spacingAndGlyphs" font-family="Liberation Serif, serif" font-size="19" font-weight="bold" fill="#000">0</text>
<text x="1269.5" y="775" text-anchor="middle" textLength="9.5" lengthAdjust="spacingAndGlyphs" font-family="Liberation Serif, serif" font-size="19" font-weight="bold" fill="#000">0</text>
<text x="632" y="747" font-family="Liberation Serif, serif" font-size="12" fill="#000">21</text>
<text x="574" y="779" font-family="Liberation Serif, serif" font-size="12" fill="#000">5</text>
<line x1="638" y1="857.5" x2="1299" y2="857.5" stroke="#e4ecec" stroke-width="1"/>
<rect x="769.8" y="842" width="1.4" height="29" fill="#000"/>
<rect x="902.8" y="842" width="1.4" height="29" fill="#000"/>
<rect x="1035.3" y="842" width="1.4" height="29" fill="#000"/>
<rect x="1167.8" y="842" width="1.4" height="29" fill="#000"/>
<rect x="1299.8" y="842" width="1.4" height="29" fill="#000"/>
<text x="650.0" y="863" text-anchor="middle" textLength="9.5" lengthAdjust="spacingAndGlyphs" font-family="Liberation Serif, serif" font-size="19" font-weight="bold" fill="#000">0</text>
<text x="680.0" y="863" text-anchor="middle" textLength="9.5" lengthAdjust="spacingAndGlyphs" font-family="Liberation Serif, serif" font-size="19" font-weight="bold" fill="#000">0</text>
<text x="710.0" y="863" text-anchor="middle" textLength="9.5" lengthAdjust="spacingAndGlyphs" font-family="Liberation Serif, serif" font-size="19" font-weight="bold" fill="#000">0</text>
<text x="740.0" y="863" text-anchor="middle" textLength="9.5" lengthAdjust="spacingAndGlyphs" font-family="Liberation Serif, serif" font-size="19" font-weight="bold" fill="#000">0</text>
<text x="782.0" y="863" text-anchor="middle" textLength="9.5" lengthAdjust="spacingAndGlyphs" font-family="Liberation Serif, serif" font-size="19" font-weight="bold" fill="#000">0</text>
<text x="812.0" y="863" text-anchor="middle" textLength="9.5" lengthAdjust="spacingAndGlyphs" font-family="Liberation Serif, serif" font-size="19" font-weight="bold" fill="#000">0</text>
<text x="842.0" y="863" text-anchor="middle" textLength="9.5" lengthAdjust="spacingAndGlyphs" font-family="Liberation Serif, serif" font-size="19" font-weight="bold" fill="#000">0</text>
<text x="872.0" y="863" text-anchor="middle" textLength="9.5" lengthAdjust="spacingAndGlyphs" font-family="Liberation Serif, serif" font-size="19" font-weight="bold" fill="#000">0</text>
<text x="914.0" y="863" text-anchor="middle" textLength="9.5" lengthAdjust="spacingAndGlyphs" font-family="Liberation Serif, serif" font-size="19" font-weight="bold" fill="#000">0</text>
<text x="944.0" y="863" text-anchor="middle" textLength="9.5" lengthAdjust="spacingAndGlyphs" font-family="Liberation Serif, serif" font-size="19" font-weight="bold" fill="#000">0</text>
<text x="974.0" y="863" text-anchor="middle" textLength="9.5" lengthAdjust="spacingAndGlyphs" font-family="Liberation Serif, serif" font-size="19" font-weight="bold" fill="#000">0</text>
<text x="1004.0" y="863" text-anchor="middle" textLength="9.5" lengthAdjust="spacingAndGlyphs" font-family="Liberation Serif, serif" font-size="19" font-weight="bold" fill="#000">0</text>
<text x="1047.0" y="863" text-anchor="middle" textLength="9.5" lengthAdjust="spacingAndGlyphs" font-family="Liberation Serif, serif" font-size="19" font-weight="bold" fill="#000">0</text>
<text x="1077.0" y="863" text-anchor="middle" textLength="9.5" lengthAdjust="spacingAndGlyphs" font-family="Liberation Serif, serif" font-size="19" font-weight="bold" fill="#000">0</text>
<text x="1107.0" y="863" text-anchor="middle" textLength="9.5" lengthAdjust="spacingAndGlyphs" font-family="Liberation Serif, serif" font-size="19" font-weight="bold" fill="#000">0</text>
<text x="1137.0" y="863" text-anchor="middle" textLength="9.5" lengthAdjust="spacingAndGlyphs" font-family="Liberation Serif, serif" font-size="19" font-weight="bold" fill="#000">0</text>
<text x="1179.5" y="863" text-anchor="middle" textLength="9.5" lengthAdjust="spacingAndGlyphs" font-family="Liberation Serif, serif" font-size="19" font-weight="bold" fill="#000">0</text>
<text x="1209.5" y="863" text-anchor="middle" textLength="9.5" lengthAdjust="spacingAndGlyphs" font-family="Liberation Serif, serif" font-size="19" font-weight="bold" fill="#000">0</text>
<text x="1239.5" y="863" text-anchor="middle" textLength="9.5" lengthAdjust="spacingAndGlyphs" font-family="Liberation Serif, serif" font-size="19" font-weight="bold" fill="#000">0</text>
<text x="1269.5" y="863" text-anchor="middle" textLength="9.5" lengthAdjust="spacingAndGlyphs" font-family="Liberation Serif, serif" font-size="19" font-weight="bold" fill="#000">0</text>
<text x="632" y="835" font-family="Liberation Serif, serif" font-size="12" fill="#000">26</text>
<text x="574" y="867" font-family="Liberation Serif, serif" font-size="12" fill="#000">6</text>
<line x1="638" y1="945.5" x2="1299" y2="945.5" stroke="#e4ecec" stroke-width="1"/>
<rect x="769.8" y="930" width="1.4" height="29" fill="#000"/>
<rect x="902.8" y="930" width="1.4" height="29" fill="#000"/>
<rect x="1035.3" y="930" width="1.4" height="29" fill="#000"/>
<rect x="1167.8" y="930" width="1.4" height="29" fill="#000"/>
<rect x="1299.8" y="930" width="1.4" height="29" fill="#000"/>
<text x="650.0" y="951" text-anchor="middle" textLength="9.5" lengthAdjust="spacingAndGlyphs" font-family="Liberation Serif, serif" font-size="19" font-weight="bold" fill="#000">0</text>
<text x="680.0" y="951" text-anchor="middle" textLength="9.5" lengthAdjust="spacingAndGlyphs" font-family="Liberation Serif, serif" font-size="19" font-weight="bold" fill="#000">0</text>
<text x="710.0" y="951" text-anchor="middle" textLength="9.5" lengthAdjust="spacingAndGlyphs" font-family="Liberation Serif, serif" font-size="19" font-weight="bold" fill="#000">0</text>
<text x="740.0" y="951" text-anchor="middle" textLength="9.5" lengthAdjust="spacingAndGlyphs" font-family="Liberation Serif, serif" font-size="19" font-weight="bold" fill="#000">0</text>
<text x="782.0" y="951" text-anchor="middle" textLength="9.5" lengthAdjust="spacingAndGlyphs" font-family="Liberation Serif, serif" font-size="19" font-weight="bold" fill="#000">0</text>
<text x="812.0" y="951" text-anchor="middle" textLength="9.5" lengthAdjust="spacingAndGlyphs" font-family="Liberation Serif, serif" font-size="19" font-weight="bold" fill="#000">0</text>
<text x="842.0" y="951" text-anchor="middle" textLength="9.5" lengthAdjust="spacingAndGlyphs" font-family="Liberation Serif, serif" font-size="19" font-weight="bold" fill="#000">0</text>
<text x="872.0" y="951" text-anchor="middle" textLength="9.5" lengthAdjust="spacingAndGlyphs" font-family="Liberation Serif, serif" font-size="19" font-weight="bold" fill="#000">0</text>
<text x="914.0" y="951" text-anchor="middle" textLength="9.5" lengthAdjust="spacingAndGlyphs" font-family="Liberation Serif, serif" font-size="19" font-weight="bold" fill="#000">0</text>
<text x="944.0" y="951" text-anchor="middle" textLength="9.5" lengthAdjust="spacingAndGlyphs" font-family="Liberation Serif, serif" font-size="19" font-weight="bold" fill="#000">0</text>
<text x="974.0" y="951" text-anchor="middle" textLength="9.5" lengthAdjust="spacingAndGlyphs" font-family="Liberation Serif, serif" font-size="19" font-weight="bold" fill="#000">0</text>
<text x="1004.0" y="951" text-anchor="middle" textLength="9.5" lengthAdjust="spacingAndGlyphs" font-family="Liberation Serif, serif" font-size="19" font-weight="bold" fill="#000">0</text>
<text x="1047.0" y="951" text-anchor="middle" textLength="9.5" lengthAdjust="spacingAndGlyphs" font-family="Liberation Serif, serif" font-size="19" font-weight="bold" fill="#000">0</text>
<text x="1077.0" y="951" text-anchor="middle" textLength="9.5" lengthAdjust="spacingAndGlyphs" font-family="Liberation Serif, serif" font-size="19" font-weight="bold" fill="#000">0</text>
<text x="1107.0" y="951" text-anchor="middle" textLength="9.5" lengthAdjust="spacingAndGlyphs" font-family="Liberation Serif, serif" font-size="19" font-weight="bold" fill="#000">0</text>
<text x="1137.0" y="951" text-anchor="middle" textLength="9.5" lengthAdjust="spacingAndGlyphs" font-family="Liberation Serif, serif" font-size="19" font-weight="bold" fill="#000">0</text>
<text x="1179.5" y="951" text-anchor="middle" textLength="9.5" lengthAdjust="spacingAndGlyphs" font-family="Liberation Serif, serif" font-size="19" font-weight="bold" fill="#000">0</text>
<text x="1209.5" y="951" text-anchor="middle" textLength="9.5" lengthAdjust="spacingAndGlyphs" font-family="Liberation Serif, serif" font-size="19" font-weight="bold" fill="#000">0</text>
<text x="1239.5" y="951" text-anchor="middle" textLength="9.5" lengthAdjust="spacingAndGlyphs" font-family="Liberation Serif, serif" font-size="19" font-weight="bold" fill="#000">0</text>
<text x="1269.5" y="951" text-anchor="middle" textLength="9.5" lengthAdjust="spacingAndGlyphs" font-family="Liberation Serif, serif" font-size="19" font-weight="bold" fill="#000">0</text>
<text x="632" y="923" font-family="Liberation Serif, serif" font-size="12" fill="#000">31</text>
<text x="574" y="955" font-family="Liberation Serif, serif" font-size="12" fill="#000">7</text>
<text x="632" y="1011" font-family="Liberation Serif, serif" font-size="12" fill="#000">36</text>
<rect x="769.8" y="1016" width="1.4" height="2" fill="#000"/>
<rect x="902.8" y="1016" width="1.4" height="2" fill="#000"/>
<rect x="1035.3" y="1016" width="1.4" height="2" fill="#000"/>
<rect x="1167.8" y="1016" width="1.4" height="2" fill="#000"/>
<rect x="1299.8" y="1016" width="1.4" height="2" fill="#000"/>
</svg>
<div class="a" style="left:1362px;top:232px;width:3px;height:787px;background:repeating-linear-gradient(#000 0 1px,transparent 1px 4.2px)"></div><div class="a" style="left:1361px;top:254px;width:4px;height:765px;background:repeating-linear-gradient(#000 0 2px,transparent 2px 37.8px)"></div>
<div class="a" style="left:1325px;top:166px;width:37px;height:16px;background:#f0f0f0"></div>
<div class="a" style="left:1326px;top:167px;width:11px;height:11px;background:#fff;border-top:1px solid #808080;border-left:1px solid #808080"></div>
<div class="a" style="left:1342px;top:165px;font-size:12px;line-height:16px">大</div>
<div class="a" style="left:1325px;top:204px;width:37px;height:27px;background:#f0f0f0"></div>
<div class="a" style="left:1326px;top:207px;width:11px;height:11px;background:#fff;border-top:1px solid #808080;border-left:1px solid #808080"></div>
<div class="a" style="left:1326px;top:221px;width:11px;height:10px;background:#fff;border-top:1px solid #808080;border-left:1px solid #808080"></div>
<div class="a" style="left:1342px;top:205px;font-size:12px;line-height:14px">连</div>
<div class="a" style="left:1342px;top:219px;font-size:12px;line-height:14px;height:12px;overflow:hidden">倚</div>
<div class="a" style="left:431px;top:561px;width:140px;height:239px;background:#f0f0f0"></div>
<div class="a" style="left:437px;top:560px;font-size:12px;line-height:16px;color:#000">信息窗口</div>
<svg class="a" style="left:562px;top:561px" width="10" height="11" viewBox="0 0 10 11"><rect width="10" height="10" fill="#e8603a"/><path d="M1.5 1.5L8.5 8.5M8.5 1.5L1.5 8.5" stroke="#fff" stroke-width="1.8"/><rect x="0" y="10" width="10" height="1" fill="#808080"/></svg>
<div class="a" style="left:433px;top:583px;width:138px;height:212px;background:#ff0"></div>
<div class="a" style="left:433px;top:583px;width:140px;font-family:'Liberation Mono',monospace;font-size:14px;line-height:14px;color:#000;white-space:pre;letter-spacing:-0.5px">　　鼠标中键或esc切
换到固定点击输入。
 
　　鼠标中键和esc可
以在固定输入和滑动
输入之间切换。
 
　　重要技巧:如果要
输入多个相同音符,可
以用滑动输入选好后,
按下鼠标中键,输入多
个相同音。小键盘+
增减高低音点。打开
capslock为大写状态
右键切换时值。</div>
<div class="a" style="z-index:2;left:1813px;top:167px;width:61px;height:19px;background:#f0f0f0;border-top:1px solid #fff;border-left:1px solid #fff;border-right:1px solid #404040;border-bottom:1px solid #404040;box-shadow:inset -1px -1px 0 #a0a0a0;font-size:13px;line-height:17px;text-align:center;white-space:nowrap">在线曲库</div>
<div class="a" style="z-index:2;left:1875px;top:167px;width:33px;height:19px;background:#f0f0f0;border-top:1px solid #fff;border-left:1px solid #fff;border-right:1px solid #404040;border-bottom:1px solid #404040;box-shadow:inset -1px -1px 0 #a0a0a0;font-size:13px;line-height:17px;text-align:center;white-space:nowrap">减行</div>
<div class="a" style="z-index:2;left:1908px;top:166px;width:11px;height:14px;background:#f0f0f0"></div>
<svg class="a" style="z-index:2;left:1909px;top:173px" width="9" height="5" viewBox="0 0 9 5"><path d="M0 0H9L4.5 5Z" fill="#000"/></svg>
<div class="a" style="left:1901px;top:180px;width:17px;height:822px;background:#fff;border-right:1px solid #a0a0a0"></div>
<div class="a" style="left:1901px;top:180px;width:16px;height:16px;background:#f0f0f0;border-top:1px solid #fff;border-left:1px solid #fff;border-right:1px solid #808080;border-bottom:1px solid #808080"></div>
<svg class="a" style="left:1906px;top:185px" width="7" height="4" viewBox="0 0 7 4"><path d="M0 4H7L3.5 0Z" fill="#000"/></svg>
<div class="a" style="left:1901px;top:196px;width:16px;height:9px;background:#f0f0f0;border-top:1px solid #fff;border-left:1px solid #fff;border-right:1px solid #808080;border-bottom:1px solid #808080"></div>
<div class="a" style="left:1909px;top:297px;width:40px;height:44px;border-radius:50%;background:#d8f8f8;opacity:0.8"></div>
<div class="a" style="left:1918px;top:165px;width:2px;height:854px;background:#f0f0f0"></div>
<div class="a" style="left:1826px;top:274px;width:79px;height:19px;background:#f0f0f0"></div>
<div class="a" style="left:1827px;top:278px;width:12px;height:12px;background:#fff;border-top:1px solid #808080;border-left:1px solid #808080;box-shadow:inset 1px 1px 0 #404040"></div>
<div class="a" style="left:1844px;top:275px;font-size:13px;line-height:16px;white-space:nowrap">音符直出</div>
<div class="a" style="left:1826px;top:294px;width:76px;height:60px;background:#f0f0f0;border-top:1px solid #808080"></div>
<div class="a" style="left:1827px;top:299px;width:12px;height:12px;background:#fff;border-top:1px solid #808080;border-left:1px solid #808080;box-shadow:inset 1px 1px 0 #404040"></div>
<div class="a" style="left:1844px;top:297px;font-size:13px;line-height:14px;white-space:nowrap">取代</div>
<div class="a" style="left:1827px;top:319px;width:12px;height:12px;background:#fff;border-top:1px solid #808080;border-left:1px solid #808080;box-shadow:inset 1px 1px 0 #404040"></div>
<div class="a" style="left:1844px;top:317px;font-size:13px;line-height:14px;white-space:nowrap">直出</div>
<div class="a" style="left:1827px;top:338px;width:12px;height:12px;background:#fff;border-top:1px solid #808080;border-left:1px solid #808080;box-shadow:inset 1px 1px 0 #404040"></div>
<div class="a" style="left:1844px;top:336px;font-size:13px;line-height:14px;white-space:nowrap">对齐</div>
<div class="a" style="left:1877px;top:295px;width:14px;height:9px;background:#f0f0f0;border-top:1px solid #fff;border-right:1px solid #808080;border-bottom:1px solid #808080"></div>
<div class="a" style="left:1877px;top:304px;width:14px;height:9px;background:#f0f0f0;border-top:1px solid #fff;border-right:1px solid #808080;border-bottom:2px solid #808080"></div>
<svg class="a" style="left:1882px;top:298px" width="5" height="3"><path d="M0 3H5L2.5 0Z" fill="#000"/></svg>
<svg class="a" style="left:1882px;top:308px" width="5" height="3"><path d="M0 0H5L2.5 3Z" fill="#000"/></svg>
<div class="a" style="left:1877px;top:315px;width:14px;height:9px;background:#f0f0f0;border-top:1px solid #fff;border-right:1px solid #808080;border-bottom:1px solid #808080"></div>
<div class="a" style="left:1877px;top:324px;width:14px;height:9px;background:#f0f0f0;border-top:1px solid #fff;border-right:1px solid #808080;border-bottom:2px solid #808080"></div>
<svg class="a" style="left:1882px;top:318px" width="5" height="3"><path d="M0 3H5L2.5 0Z" fill="#000"/></svg>
<svg class="a" style="left:1882px;top:328px" width="5" height="3"><path d="M0 0H5L2.5 3Z" fill="#000"/></svg>
<div class="a" style="left:1877px;top:336px;width:14px;height:9px;background:#f0f0f0;border-top:1px solid #fff;border-right:1px solid #808080;border-bottom:1px solid #808080"></div>
<div class="a" style="left:1877px;top:345px;width:14px;height:9px;background:#f0f0f0;border-top:1px solid #fff;border-right:1px solid #808080;border-bottom:2px solid #808080"></div>
<svg class="a" style="left:1882px;top:339px" width="5" height="3"><path d="M0 3H5L2.5 0Z" fill="#000"/></svg>
<svg class="a" style="left:1882px;top:349px" width="5" height="3"><path d="M0 0H5L2.5 3Z" fill="#000"/></svg>
<div class="a" style="left:1891px;top:316px;font-size:12px;line-height:20px;width:11px;overflow:hidden">高<br>间</div>
<div class="a" style="left:1829px;top:354px;width:72px;height:505px;background:#f0f0f0;border-right:1px solid #a0a0a0"></div>
<div class="a" style="left:1852px;top:354px;width:1px;height:505px;background:#a0a0a0"></div>
<div class="a" style="left:1876px;top:354px;width:1px;height:505px;background:#a0a0a0"></div>
<div class="a" style="left:1832px;top:468px;width:18px;height:1px;background:#a8a8a8"></div>
<div class="a" style="left:1856px;top:468px;width:18px;height:1px;background:#a8a8a8"></div>
<div class="a" style="left:1880px;top:468px;width:18px;height:1px;background:#a8a8a8"></div>
<div class="a" style="left:1832px;top:588px;width:18px;height:1px;background:#a8a8a8"></div>
<div class="a" style="left:1856px;top:588px;width:18px;height:1px;background:#a8a8a8"></div>
<div class="a" style="left:1880px;top:588px;width:18px;height:1px;background:#a8a8a8"></div>
<div class="a" style="left:1832px;top:705px;width:18px;height:1px;background:#a8a8a8"></div>
<div class="a" style="left:1856px;top:705px;width:18px;height:1px;background:#a8a8a8"></div>
<div class="a" style="left:1880px;top:705px;width:18px;height:1px;background:#a8a8a8"></div>
<!--PALETTE-START--><svg class="a" style="left:1829px;top:354px" width="72" height="505" viewBox="1829 354 72 505"><text x="1840.5" y="369.0" text-anchor="middle" font-family="Liberation Serif, serif" font-size="11" font-weight="bold" fill="#000">I</text><g transform="translate(1864.5 365)"><path d="M-2.5 4L0 -5L2.5 4" stroke="#9ab0c8" stroke-width="1" fill="none"/></g><text x="1888.5" y="369.0" text-anchor="middle" font-family="Liberation Serif, serif" font-size="12" font-weight="bold" font-style="italic" fill="#000" textLength="19" lengthAdjust="spacingAndGlyphs">ppp</text><text x="1840.5" y="391.0" text-anchor="middle" font-family="Liberation Serif, serif" font-size="10" font-weight="bold" fill="#000">II</text><ellipse cx="1864.5" cy="387" rx="2.3" ry="3" fill="none" stroke="#000" stroke-width="1.6"/><text x="1888.5" y="391.0" text-anchor="middle" font-family="Liberation Serif, serif" font-size="13" font-weight="bold" font-style="italic" fill="#000">pp</text><text x="1840.5" y="413.0" text-anchor="middle" font-family="Liberation Serif, serif" font-size="10" font-weight="bold" fill="#000" textLength="11" lengthAdjust="spacingAndGlyphs">III</text><g transform="translate(1864.5 409)"><path d="M-5 -1H5M-1 -5Q2 -3 1 0Q0 3 -2 5" stroke="#000" stroke-width="1.3" fill="none"/></g><text x="1888.5" y="413.0" text-anchor="middle" font-family="Liberation Serif, serif" font-size="13" font-weight="bold" font-style="italic" fill="#000">p</text><text x="1840.5" y="435.0" text-anchor="middle" font-family="Liberation Serif, serif" font-size="11" fill="#000" textLength="10" lengthAdjust="spacingAndGlyphs" stroke="#000" stroke-width="0.3">IV</text><g transform="translate(1864.5 431)"><path d="M-6 1L-3 -2L0 1L3 -2L6 1L3 3L0 0L-3 3Z M0 -4V4" stroke="#000" stroke-width="0.8" fill="#000"/></g><text x="1888.5" y="435.0" text-anchor="middle" font-family="Liberation Serif, serif" font-size="12" font-weight="bold" font-style="italic" fill="#000">mp</text><g transform="translate(1840.5 453)"><path d="M-3 0.5A2 1.5 0 1 1 -7 0.5A2 1.5 0 1 1 -3 0.5ZM-3 0Q0 -1.5 6 -0.5" stroke="#000" stroke-width="1" fill="none"/></g><g transform="translate(1864.5 453)"><path d="M-4 1Q-3 -2 -1 0Q1 2 3 -1M-4 1Q-2 3 0 1" stroke="#000" stroke-width="1.2" fill="none"/></g><text x="1888.5" y="457.0" text-anchor="middle" font-family="Liberation Serif, serif" font-size="13" font-weight="bold" font-style="italic" fill="#000">fp</text><text x="1840.5" y="487.0" text-anchor="middle" font-family="Liberation Serif, serif" font-size="12" font-weight="bold" font-style="italic" fill="#000">sf</text><g transform="translate(1864.5 483)"><path d="M-3 -7V1" stroke="#000" stroke-width="1" fill="none"/></g><ellipse cx="1859.5" cy="485" rx="2.4" ry="1.8" fill="#000"/><g transform="translate(1864.5 483)"><path d="M1 0H6M1 3H6" stroke="#000" stroke-width="1.2" fill="none"/></g><text x="1888.5" y="487.0" text-anchor="middle" font-family="Liberation Serif, serif" font-size="12" font-weight="bold" font-style="italic" fill="#000">mf</text><text x="1840.5" y="509.0" text-anchor="middle" font-family="Liberation Serif, serif" font-size="11" font-weight="bold" font-style="italic" fill="#000">sff</text><g transform="translate(1864.5 505)"><path d="M-3 -7V1M-3 -7Q0 -5 -1 -1" stroke="#000" stroke-width="1" fill="none"/></g><ellipse cx="1859.5" cy="507" rx="2.4" ry="1.8" fill="#000"/><g transform="translate(1864.5 505)"><path d="M1 1H6M1 4H6" stroke="#000" stroke-width="1.2" fill="none"/></g><text x="1888.5" y="509.0" text-anchor="middle" font-family="Liberation Serif, serif" font-size="14" font-weight="bold" font-style="italic" fill="#000">f</text><g transform="translate(1840.5 527)"><path d="M-4 -1H4M-3 -4L0 -1L3 -4M0 -1V4" stroke="#000" stroke-width="1.1" fill="none"/></g><g transform="translate(1864.5 527)"><path d="M-4 -1Q0 4 4 -2" stroke="#000" stroke-width="1.1" fill="none"/></g><text x="1888.5" y="531.0" text-anchor="middle" font-family="Liberation Serif, serif" font-size="12" font-weight="bold" font-style="italic" fill="#000">.ff</text><g transform="translate(1840.5 549)"><path d="M-4 -1Q0 4 4 -1M-3 -1H3" stroke="#000" stroke-width="1.1" fill="none"/></g><g transform="translate(1864.5 549)"><path d="M-4 2Q0 -4 4 2" stroke="#000" stroke-width="1.1" fill="none"/></g><text x="1888.5" y="553.0" text-anchor="middle" font-family="Liberation Serif, serif" font-size="11" font-weight="bold" font-style="italic" fill="#000" textLength="18" lengthAdjust="spacingAndGlyphs">.fff</text><g transform="translate(1840.5 571)"><path d="M-8 0L-6 -1.5L-4 0L-2 -1.5L0 0L2 -1.5L4 0L6 -1.5L8 0" stroke="#000" stroke-width="0.9" fill="none"/></g><g transform="translate(1864.5 571)"><path d="M-2 -6Q-2 1 3 4M1 4H4V1" stroke="#000" stroke-width="1" fill="none"/></g><text x="1888.5" y="575.0" text-anchor="middle" font-family="Liberation Serif, serif" font-size="12" font-weight="bold" font-style="italic" fill="#000">sfp</text><g transform="translate(1840.5 602)"><path d="M-8 0L-6 -1.5L-4 0L-2 -1.5L0 0L2 -1.5L4 0L6 -1.5L8 0" stroke="#000" stroke-width="0.9" fill="none"/></g><g transform="translate(1864.5 602)"><path d="M-4 5Q1 2 3 -4M1 -3L3 -5L4 -2" stroke="#000" stroke-width="1" fill="none"/></g><text x="1888.5" y="606.0" text-anchor="middle" font-family="Liberation Mono, monospace" font-size="11" fill="#000">tr</text><g transform="translate(1840.5 623)"><path d="M-4 -4Q0 -7 4 -4M-3 -2H3M-3 1L0 -1.5L3 1L0 4Z" stroke="#000" stroke-width="1.1" fill="none"/></g><g transform="translate(1864.5 623)"><path d="M-4 0H4M0 -4V4M-3 -3L3 3M3 -3L-3 3" stroke="#000" stroke-width="1.3" fill="none"/></g><g transform="translate(1888.5 623)"><path d="M-4 -6L0 6L4 -6" stroke="#000" stroke-width="2.4" fill="none"/></g><g transform="translate(1840.5 645)"><path d="M-4 -5H4M-4 -2H4M-4 1.5H4V4.5H-4Z" stroke="#000" stroke-width="1.1" fill="none"/></g><rect x="1836.5" y="646" width="8" height="3" fill="#000"/><g transform="translate(1864.5 645)"><path d="M-6 5L2 -4M-2 5L6 -4M-4 -2L-2 0M2 1L4 3" stroke="#000" stroke-width="1.3" fill="none"/></g><g transform="translate(1888.5 645)"><path d="M1 -7L-2 -3L2 0L-2 4L0 7" stroke="#000" stroke-width="1.2" fill="none"/></g><g transform="translate(1840.5 667)"><path d="M0 -6V1M-3 5H3V2Q0 0 -3 2Z" stroke="#000" stroke-width="1" fill="none"/></g><g transform="translate(1864.5 667)"><path d="M-4 0Q0 5 4 0M0 -3V-2" stroke="#000" stroke-width="1.1" fill="none"/></g><g transform="translate(1888.5 667)"><path d="M-6 2L-3 -2L0 1L3 -2L6 2L3 3L0 0L-3 3Z" stroke="#000" stroke-width="1.2" fill="#000"/></g><g transform="translate(1840.5 689)"><path d="M-2 -3Q2 -4 1 0L3 4L-1 0Z" stroke="#000" stroke-width="0.8" fill="#000"/></g><circle cx="1864.5" cy="689" r="1.2" fill="#000"/><g transform="translate(1888.5 689)"><path d="M-6 2Q-6 -3 -2 -1Q2 2 4 -1Q6 -4 6 -1Q5 3 1 1Q-3 -2 -4 2Q-5 4 -6 2" stroke="#000" stroke-width="2.2" fill="none"/></g><g transform="translate(1840.5 719)"><path d="M-3 -3L3 3M-3 0L3 -3M-2 3L3 0" stroke="#000" stroke-width="1" fill="none"/></g><g transform="translate(1864.5 719)"><path d="M-4 0H5" stroke="#000" stroke-width="1.1" fill="none"/></g><g transform="translate(1888.5 719)"><path d="M1 -6Q-2 0 0 6" stroke="#000" stroke-width="1.1" fill="none"/></g><g transform="translate(1840.5 741)"><path d="M-2 -4V4M-2 0L2 2" stroke="#000" stroke-width="1" fill="none"/></g><g transform="translate(1864.5 741)"><path d="M-5 3Q-1 -2 5 -1" stroke="#000" stroke-width="1.1" fill="none"/></g><g transform="translate(1888.5 741)"><path d="M-1 -6Q2 0 0 6" stroke="#000" stroke-width="1.1" fill="none"/></g><g transform="translate(1840.5 763)"><path d="M-4 -4V4M-4 0H4M-1 -3L3 0L-1 3" stroke="#000" stroke-width="1" fill="none"/></g><g transform="translate(1864.5 763)"><path d="M-5 -1Q-1 -2 4 2" stroke="#000" stroke-width="1.1" fill="none"/></g><g transform="translate(1888.5 763)"><path d="M-5 -6L-2 -3L-3 -1L0 2L-1 4L4 6" stroke="#000" stroke-width="1.2" fill="none"/></g><g transform="translate(1840.5 785)"><path d="M0 -8V8" stroke="#000" stroke-width="1" fill="none"/></g><g transform="translate(1864.5 785)"><path d="M-1.5 -4H1.5M0 -4V4M-1.5 4H1.5" stroke="#000" stroke-width="1" fill="none"/></g><g transform="translate(1888.5 785)"><path d="M-5 6L-1 0L0 1L5 -5" stroke="#000" stroke-width="1.2" fill="none"/></g><g transform="translate(1840.5 807)"><path d="M-3 -3L3 -5M-3 0L3 -2M-3 3L3 1M-3 6L3 4" stroke="#000" stroke-width="2" fill="none"/></g><g transform="translate(1864.5 807)"><path d="M-1.5 -4V4M1.5 -4V4" stroke="#e8a868" stroke-width="1" fill="none"/></g><g transform="translate(1888.5 807)"><path d="M-6 6L2 -5M-2 6L6 -5" stroke="#000" stroke-width="2.4" fill="none"/></g></svg><!--PALETTE-END-->
<div class="a" style="left:1829px;top:1002px;width:76px;height:17px;background:#f0f0f0"></div>
<div class="a" style="left:1831px;top:1004px;width:11px;height:11px;background:#fff;border:1px solid #808080"></div>
<svg class="a" style="left:1832px;top:1005px" width="9" height="9" viewBox="0 0 9 9"><path d="M1 4.5L3.5 7L8 1.5" stroke="#000" stroke-width="1.6" fill="none"/></svg>
<div class="a" style="left:1846px;top:1002px;font-size:13px;line-height:16px;white-space:nowrap">自动整理</div>
<div class="a" style="left:1902px;top:1002px;width:16px;height:17px;background:#f0f0f0;border:1px solid #c0c0c0"></div>
<svg class="a" style="left:1906px;top:1008px" width="8" height="5" viewBox="0 0 8 5"><path d="M0 0H8L4 5Z" fill="#000"/></svg>
<div class="a" style="left:3px;top:1021px;width:38px;height:18px;background:#f0f0f0;border-left:1px solid #fff;border-top:1px solid #fff;border-right:1px solid #808080;font-size:13px;line-height:17px;text-align:center;white-space:nowrap;overflow:hidden">打印</div>
<div class="a" style="left:42px;top:1021px;width:58px;height:18px;background:#f0f0f0;border-left:1px solid #fff;border-top:1px solid #fff;border-right:1px solid #808080;font-size:13px;line-height:17px;text-align:center;white-space:nowrap;overflow:hidden">页面设置</div>
<div class="a" style="left:101px;top:1021px;width:59px;height:18px;background:#f0f0f0;border-left:1px solid #fff;border-top:1px solid #fff;border-right:1px solid #808080;font-size:13px;line-height:17px;text-align:center;white-space:nowrap;overflow:hidden">预览出图</div>
<div class="a" style="left:161px;top:1021px;width:36px;height:18px;background:#f0f0f0;border-left:1px solid #fff;border-top:1px solid #fff;border-right:1px solid #808080;font-size:13px;line-height:17px;text-align:center;white-space:nowrap;overflow:hidden">设置</div>
<div class="a" style="left:198px;top:1021px;width:88px;height:18px;background:#f0f0f0;border-left:1px solid #808080;border-top:1px solid #808080;font-size:13px;font-weight:bold;line-height:17px;padding-left:5px;white-space:nowrap;overflow:hidden">疏密小节</div>
<div class="a" style="left:289px;top:1021px;width:81px;height:18px;background:#f0f0f0;border-left:1px solid #808080;border-top:1px solid #808080;font-size:13px;font-weight:bold;line-height:17px;padding-left:5px;white-space:nowrap;overflow:hidden">速度: 100</div>
<div class="a" style="left:373px;top:1021px;width:73px;height:18px;background:#f0f0f0;border-left:1px solid #808080;border-top:1px solid #808080;font-size:13px;font-weight:bold;line-height:17px;padding-left:5px;white-space:nowrap;overflow:hidden">节奏: 4/ 4</div>
<div class="a" style="left:449px;top:1021px;width:75px;height:18px;background:#f0f0f0;border-left:1px solid #808080;border-top:1px solid #808080;font-size:13px;font-weight:bold;line-height:17px;padding-left:5px;white-space:nowrap;overflow:hidden">共 1个声部</div>
<div class="a" style="left:527px;top:1021px;width:83px;height:18px;background:#f0f0f0;border-left:1px solid #808080;border-top:1px solid #808080;font-size:13px;font-weight:bold;line-height:17px;padding-left:5px;white-space:nowrap;overflow:hidden">标准点变散板</div>
<div class="a" style="left:613px;top:1021px;width:73px;height:18px;background:#f0f0f0;border-left:1px solid #808080;border-top:1px solid #808080;font-size:13px;font-weight:bold;line-height:17px;padding-left:5px;white-space:nowrap;overflow:hidden">共 24行</div>
<div class="a" style="left:689px;top:1021px;width:73px;height:18px;background:#f0f0f0;border-left:1px solid #808080;border-top:1px solid #808080;font-size:13px;font-weight:bold;line-height:17px;padding-left:5px;white-space:nowrap;overflow:hidden">CAPS L 小</div>
<div class="a" style="left:766px;top:1021px;width:73px;height:18px;background:#f0f0f0;border-left:1px solid #808080;border-top:1px solid #808080;font-size:13px;font-weight:bold;line-height:17px;padding-left:5px;white-space:nowrap;overflow:hidden">SHIFT 空</div>
<div class="a" style="left:843px;top:1021px;width:73px;height:18px;background:#f0f0f0;border-left:1px solid #808080;border-top:1px solid #808080;font-size:13px;font-weight:bold;line-height:17px;padding-left:5px;white-space:nowrap;overflow:hidden">CTRL 空</div>
<div class="a" style="left:920px;top:1021px;width:60px;height:18px;background:#f0f0f0;border-left:1px solid #808080;border-top:1px solid #808080;font-size:13px;font-weight:bold;line-height:17px;padding-left:5px;white-space:nowrap;overflow:hidden">标准音距</div>
<div class="a" style="left:981px;top:1022px;width:15px;height:16px;background:#f0f0f0"></div><svg class="a" style="left:984px;top:1026px" width="5" height="8" viewBox="0 0 5 8"><path d="M5 0V8L0 4Z" fill="#000"/></svg>
<div class="a" style="left:996px;top:1021px;width:426px;height:18px;background:#fff;border-left:2px solid #808080;border-top:1px solid #a0a0a0"></div>
<div class="a" style="left:1429px;top:1021px;width:431px;height:18px;background:#fff;border-left:1px solid #808080;border-top:1px solid #808080"></div>
<div class="a" style="left:1422px;top:1021px;width:7px;height:18px;background:#f0f0f0;border-left:1px solid #fff"></div><div class="a" style="left:1860px;top:1021px;width:16px;height:18px;background:#f0f0f0;border-left:1px solid #fff"></div><svg class="a" style="left:1864px;top:1027px" width="5" height="8" viewBox="0 0 5 8"><path d="M0 0V8L5 4Z" fill="#000"/></svg>
<div class="a" style="left:1876px;top:1019px;width:31px;height:18px;background:#f0f0f0;border-top:1px solid #fff;border-left:1px solid #fff;border-right:1px solid #404040;border-bottom:1px solid #404040;box-shadow:inset -1px -1px 0 #a0a0a0;font-size:13px;line-height:16px;text-align:center;white-space:nowrap">增行</div>
<div class="a" style="left:1907px;top:1019px;width:12px;height:18px;background:#f0f0f0"></div>
<svg class="a" style="left:1909px;top:1024px" width="8" height="5" viewBox="0 0 8 5"><path d="M0 0H8L4 5Z" fill="#000"/></svg>
<!-- TASKBAR -->
<div class="a" style="left:0;top:1040px;width:1920px;height:8px;background:linear-gradient(90deg,#1e1e28 0px,#20202a 540px,#3e3e3e 720px,#424242 1920px);overflow:hidden"><div class="a" style="left:1789px;top:3px;font-size:13px;line-height:16px;color:#fff;white-space:nowrap">12:12 星期三</div><div class="a" style="left:1898px;top:0;width:1px;height:8px;background:#888"></div></div>

<!-- DIALOG -->

<div class="a" style="left:7px;top:14px;width:946px;height:533px;background:#fff;border:1px solid #6e6e6e;box-shadow:0 2px 16px 2px rgba(0,0,0,0.38)"></div>
<!-- dialog title -->
<svg class="a" style="left:16px;top:21px" width="16" height="16" viewBox="0 0 16 16" shape-rendering="crispEdges"><rect width="16" height="16" fill="#fff"/><rect y="0" width="16" height="1" fill="#0000ff"/><rect y="1" width="16" height="1" fill="#c8f4ff"/><rect y="2" width="16" height="2" fill="#0000ff"/><rect y="4" width="16" height="1" fill="#c8f4ff"/><path d="M0 5H5V7H4V8H1V7H0Z" fill="#0000ff"/><path d="M11 5H16V9H15V8H13V6H11Z" fill="#0000ff"/><path d="M1 2H2V5H1ZM4 2H5V4H4ZM2 5H3V6H2ZM12 3H13V4H12ZM3 6H5V7H3Z" fill="#ffff00"/><path d="M10 2H11V4H10ZM14 2H15V3H14ZM5 5H6V6H5Z" fill="#000"/><path d="M0 9H3V10H5V11H8V12H11V11H14V10H16V16H0Z" fill="#008000"/><path d="M0 10H2V11H4V12H7V13H9V14H11V16H10V15H8V14H6V13H3V12H0Z" fill="#20808a"/><path d="M0 14H1V16H0ZM3 14H5V16H3ZM7 14H8V16H7ZM12 14H13V16H12ZM14 13H16V16H14Z" fill="#00ff00"/><rect x="9" y="8" width="3" height="1" fill="#c0c0c0"/></svg>
<div class="a" style="left:37px;top:21px;font-size:12px;line-height:16px;color:#000">调入旧曲</div>
<svg class="a" style="left:931px;top:23px" width="12" height="12" viewBox="0 0 12 12"><path d="M1 1L11 11M11 1L1 11" stroke="#000" stroke-width="1.1"/></svg>

<!-- nav arrows -->
<svg class="a" style="left:20px;top:58px" width="16" height="16" viewBox="0 0 16 16"><path d="M13 8H3M7 4L3 8L7 12" stroke="#bfbfbf" stroke-width="1.2" fill="none"/></svg>
<svg class="a" style="left:49px;top:58px" width="16" height="16" viewBox="0 0 16 16"><path d="M3 8H13M9 4L13 8L9 12" stroke="#bfbfbf" stroke-width="1.2" fill="none"/></svg>
<svg class="a" style="left:77px;top:62px" width="8" height="6" viewBox="0 0 8 6"><path d="M1 1L4 4L7 1" stroke="#bfbfbf" stroke-width="1" fill="none"/></svg>
<svg class="a" style="left:93px;top:58px" width="16" height="16" viewBox="0 0 16 16"><path d="M8 14V3M3.5 7.5L8 3L12.5 7.5" stroke="#4d4d4d" stroke-width="1.4" fill="none"/></svg>

<!-- address bar -->
<div class="a" style="left:114px;top:50px;width:578px;height:31px;border:1px solid #d9d9d9;background:#fff"></div>
<div class="a" style="left:691px;top:50px;width:35px;height:31px;border:1px solid #d9d9d9;background:#fff"></div>
<svg class="a" style="left:703px;top:59px" width="13" height="13" viewBox="0 0 13 13"><path d="M10.5 6.5A4 4 0 1 1 8 2.8" stroke="#404040" stroke-width="1.2" fill="none"/><path d="M7 0.5L9.5 2.8L7 5" stroke="#404040" stroke-width="1.2" fill="none"/></svg>
<div class="a folder" style="left:119px;top:57px"></div>
<svg class="a" style="left:141px;top:62px" width="6" height="7" viewBox="0 0 6 7"><path d="M1 0.5L4.5 3.5L1 6.5" stroke="#606060" stroke-width="1.3" fill="none"/></svg>
<div class="a" style="left:156px;top:57px;font-size:12px;line-height:16px;color:#000;white-space:nowrap">此电脑</div>
<svg class="a" style="left:202px;top:62px" width="6" height="7" viewBox="0 0 6 7"><path d="M1 0.5L4.5 3.5L1 6.5" stroke="#606060" stroke-width="1.3" fill="none"/></svg>
<div class="a" style="left:217px;top:57px;font-size:12px;line-height:16px;color:#000;white-space:nowrap">软件 (E:)</div>
<svg class="a" style="left:273px;top:62px" width="6" height="7" viewBox="0 0 6 7"><path d="M1 0.5L4.5 3.5L1 6.5" stroke="#606060" stroke-width="1.3" fill="none"/></svg>
<div class="a" style="left:289px;top:57px;font-size:12px;line-height:16px;color:#000;white-space:nowrap">MUSICDREAMGX</div>
<svg class="a" style="left:398px;top:62px" width="6" height="7" viewBox="0 0 6 7"><path d="M1 0.5L4.5 3.5L1 6.5" stroke="#606060" stroke-width="1.3" fill="none"/></svg>
<svg class="a" style="left:669px;top:61px" width="11" height="8" viewBox="0 0 11 8"><path d="M1 1.5L5.5 6L10 1.5" stroke="#606060" stroke-width="1.2" fill="none"/></svg>

<!-- search -->
<div class="a" style="left:738px;top:50px;width:203px;height:31px;border:1px solid #d9d9d9;background:#fff"></div>
<div class="a" style="left:748px;top:57px;font-size:12px;line-height:16px;color:#6d6d6d;white-space:nowrap">搜索"MUSICDREAMGX"</div>
<svg class="a" style="left:918px;top:58px" width="14" height="14" viewBox="0 0 14 14"><circle cx="8.5" cy="5.5" r="3.8" stroke="#505050" stroke-width="1.2" fill="none"/><path d="M6 8L1.5 12.5" stroke="#505050" stroke-width="1.4"/></svg>

<!-- command bar -->
<div class="a" style="left:8px;top:88px;width:944px;height:32px;background:#f5f6f7;border-bottom:1px solid #e8eaec"></div>
<div class="a" style="left:26px;top:95px;font-size:12px;line-height:16px;color:#000;white-space:nowrap">组织</div>
<svg class="a" style="left:54px;top:101px" width="8" height="5" viewBox="0 0 8 5"><path d="M0 0H8L4 4.5Z" fill="#1e2f50"/></svg>
<div class="a" style="left:94px;top:95px;font-size:12px;line-height:16px;color:#000;white-space:nowrap">新建文件夹</div>
<svg class="a" style="left:830px;top:96px" width="17" height="14" viewBox="0 0 17 14"><rect x="0.5" y="0.5" width="4" height="13" fill="#fff" stroke="#9a9a9a"/><rect x="6" y="1.5" width="4" height="1.3" fill="#666"/><rect x="12" y="1.5" width="4" height="1.3" fill="#666"/><rect x="6" y="5.5" width="4" height="1.3" fill="#666"/><rect x="12" y="5.5" width="4" height="1.3" fill="#666"/><rect x="6" y="9.5" width="4" height="1.3" fill="#666"/><rect x="12" y="9.5" width="4" height="1.3" fill="#666"/><rect x="2" y="2" width="1" height="1" fill="#2a6"/><rect x="2" y="6" width="1" height="1" fill="#36f"/><rect x="2" y="10" width="1" height="1" fill="#e22"/></svg>
<svg class="a" style="left:856px;top:101px" width="8" height="5" viewBox="0 0 8 5"><path d="M0 0H8L4 4.5Z" fill="#1e2f50"/></svg>
<svg class="a" style="left:885px;top:97px" width="17" height="13" viewBox="0 0 17 13"><rect x="0.5" y="0.5" width="16" height="12" fill="#fff" stroke="#7a7a7a"/><rect x="9" y="1" width="7" height="11" fill="#3c8fe0"/><rect x="4" y="1" width="1" height="11" fill="#999"/><rect x="1" y="1" width="15" height="1" fill="#7a7a7a"/></svg>
<svg class="a" style="left:921px;top:95px" width="17" height="17" viewBox="0 0 17 17"><circle cx="8.5" cy="8.5" r="8" fill="#0060b8"/><path d="M6 6.3Q6 3.8 8.6 3.8Q11.2 3.8 11.2 6.2Q11.2 7.6 9.6 8.6Q8.6 9.2 8.6 10.6" stroke="#fff" stroke-width="1.8" fill="none"/><rect x="7.6" y="12" width="2" height="2" fill="#fff"/></svg>

<div class="a" style="left:165px;top:120px;width:771px;height:346px;background:#fff;overflow:hidden">
<div class="a" style="left:20px;top:6px;font-size:12px;line-height:16px;color:#4c607a">名称</div>
<svg class="a" style="left:139px;top:0px" width="10" height="6" viewBox="0 0 10 6"><path d="M1 5L5 1L9 5" stroke="#808080" stroke-width="1" fill="none"/></svg>
<div class="a" style="left:275px;top:0;width:1px;height:27px;background:#e5e5e5"></div>
<div class="a" style="letter-spacing:0.5px;left:281px;top:7px;font-size:12px;line-height:16px;color:#4c607a;white-space:nowrap">修改日期</div>
<div class="a" style="left:418px;top:0;width:1px;height:27px;background:#e5e5e5"></div>
<div class="a" style="left:425px;top:7px;font-size:12px;line-height:16px;color:#4c607a;white-space:nowrap">类型</div>
<div class="a" style="left:538px;top:0;width:1px;height:27px;background:#e5e5e5"></div>
<div class="a" style="left:545px;top:6px;font-size:12px;line-height:16px;color:#4c607a;white-space:nowrap">大小</div>
<div class="a" style="left:618px;top:0;width:1px;height:27px;background:#e5e5e5"></div>
<div class="a" style="left:17px;top:243px;width:598px;height:21px;background:#e5f3ff"></div>
<div class="a folder" style="left:22px;top:35px"></div>
<div class="a" style="left:41px;top:36px;font-size:12px;line-height:16px;color:#000;white-space:nowrap">作曲大师经典版例子</div>
<div class="a" style="letter-spacing:0.5px;left:281px;top:36px;font-size:12px;line-height:16px;color:#6d6d6d;white-space:nowrap">2023/11/15 16:02</div>
<div class="a" style="left:425px;top:36px;font-size:12px;line-height:16px;color:#6d6d6d;white-space:nowrap">文件夹</div>
<div class="a" style="left:540px;top:36px;width:71px;text-align:right;font-size:12px;line-height:16px;color:#6d6d6d;white-space:nowrap"></div>
<svg class="a" style="left:21px;top:56px" width="16" height="16" viewBox="0 0 16 16" shape-rendering="crispEdges"><rect width="16" height="16" fill="#fff"/><rect y="0" width="16" height="1" fill="#0000ff"/><rect y="1" width="16" height="1" fill="#c8f4ff"/><rect y="2" width="16" height="2" fill="#0000ff"/><rect y="4" width="16" height="1" fill="#c8f4ff"/><path d="M0 5H5V7H4V8H1V7H0Z" fill="#0000ff"/><path d="M11 5H16V9H15V8H13V6H11Z" fill="#0000ff"/><path d="M1 2H2V5H1ZM4 2H5V4H4ZM2 5H3V6H2ZM12 3H13V4H12ZM3 6H5V7H3Z" fill="#ffff00"/><path d="M10 2H11V4H10ZM14 2H15V3H14ZM5 5H6V6H5Z" fill="#000"/><path d="M0 9H3V10H5V11H8V12H11V11H14V10H16V16H0Z" fill="#008000"/><path d="M0 10H2V11H4V12H7V13H9V14H11V16H10V15H8V14H6V13H3V12H0Z" fill="#20808a"/><path d="M0 14H1V16H0ZM3 14H5V16H3ZM7 14H8V16H7ZM12 14H13V16H12ZM14 13H16V16H14Z" fill="#00ff00"/><rect x="9" y="8" width="3" height="1" fill="#c0c0c0"/></svg>
<div class="a" style="left:41px;top:57px;font-size:12px;line-height:16px;color:#000;white-space:nowrap">44拍风格2018-4.jpd</div>
<div class="a" style="letter-spacing:0.5px;left:281px;top:57px;font-size:12px;line-height:16px;color:#6d6d6d;white-space:nowrap">2020/2/1 13:30</div>
<div class="a" style="left:425px;top:57px;font-size:12px;line-height:16px;color:#6d6d6d;white-space:nowrap">音乐梦想家简谱文...</div>
<div class="a" style="left:540px;top:57px;width:71px;text-align:right;font-size:12px;line-height:16px;color:#6d6d6d;white-space:nowrap">606 KB</div>
<svg class="a" style="left:21px;top:77px" width="16" height="16" viewBox="0 0 16 16" shape-rendering="crispEdges"><rect width="16" height="16" fill="#fff"/><rect y="0" width="16" height="1" fill="#0000ff"/><rect y="1" width="16" height="1" fill="#c8f4ff"/><rect y="2" width="16" height="2" fill="#0000ff"/><rect y="4" width="16" height="1" fill="#c8f4ff"/><path d="M0 5H5V7H4V8H1V7H0Z" fill="#0000ff"/><path d="M11 5H16V9H15V8H13V6H11Z" fill="#0000ff"/><path d="M1 2H2V5H1ZM4 2H5V4H4ZM2 5H3V6H2ZM12 3H13V4H12ZM3 6H5V7H3Z" fill="#ffff00"/><path d="M10 2H11V4H10ZM14 2H15V3H14ZM5 5H6V6H5Z" fill="#000"/><path d="M0 9H3V10H5V11H8V12H11V11H14V10H16V16H0Z" fill="#008000"/><path d="M0 10H2V11H4V12H7V13H9V14H11V16H10V15H8V14H6V13H3V12H0Z" fill="#20808a"/><path d="M0 14H1V16H0ZM3 14H5V16H3ZM7 14H8V16H7ZM12 14H13V16H12ZM14 13H16V16H14Z" fill="#00ff00"/><rect x="9" y="8" width="3" height="1" fill="#c0c0c0"/></svg>
<div class="a" style="left:41px;top:78px;font-size:12px;line-height:16px;color:#000;white-space:nowrap">299D16.mud</div>
<div class="a" style="letter-spacing:0.5px;left:281px;top:78px;font-size:12px;line-height:16px;color:#6d6d6d;white-space:nowrap">2021/8/17 10:54</div>
<div class="a" style="left:425px;top:78px;font-size:12px;line-height:16px;color:#6d6d6d;white-space:nowrap">音乐梦想家五线谱...</div>
<div class="a" style="left:540px;top:78px;width:71px;text-align:right;font-size:12px;line-height:16px;color:#6d6d6d;white-space:nowrap">54 KB</div>
<svg class="a" style="left:21px;top:98px" width="16" height="16" viewBox="0 0 16 16" shape-rendering="crispEdges"><rect width="16" height="16" fill="#fff"/><rect y="0" width="16" height="1" fill="#0000ff"/><rect y="1" width="16" height="1" fill="#c8f4ff"/><rect y="2" width="16" height="2" fill="#0000ff"/><rect y="4" width="16" height="1" fill="#c8f4ff"/><path d="M0 5H5V7H4V8H1V7H0Z" fill="#0000ff"/><path d="M11 5H16V9H15V8H13V6H11Z" fill="#0000ff"/><path d="M1 2H2V5H1ZM4 2H5V4H4ZM2 5H3V6H2ZM12 3H13V4H12ZM3 6H5V7H3Z" fill="#ffff00"/><path d="M10 2H11V4H10ZM14 2H15V3H14ZM5 5H6V6H5Z" fill="#000"/><path d="M0 9H3V10H5V11H8V12H11V11H14V10H16V16H0Z" fill="#008000"/><path d="M0 10H2V11H4V12H7V13H9V14H11V16H10V15H8V14H6V13H3V12H0Z" fill="#20808a"/><path d="M0 14H1V16H0ZM3 14H5V16H3ZM7 14H8V16H7ZM12 14H13V16H12ZM14 13H16V16H14Z" fill="#00ff00"/><rect x="9" y="8" width="3" height="1" fill="#c0c0c0"/></svg>
<div class="a" style="left:41px;top:99px;font-size:12px;line-height:16px;color:#000;white-space:nowrap">299第16条1.mud</div>
<div class="a" style="letter-spacing:0.5px;left:281px;top:99px;font-size:12px;line-height:16px;color:#6d6d6d;white-space:nowrap">2021/8/17 10:57</div>
<div class="a" style="left:425px;top:99px;font-size:12px;line-height:16px;color:#6d6d6d;white-space:nowrap">音乐梦想家五线谱...</div>
<div class="a" style="left:540px;top:99px;width:71px;text-align:right;font-size:12px;line-height:16px;color:#6d6d6d;white-space:nowrap">405 KB</div>
<svg class="a" style="left:21px;top:119px" width="16" height="16" viewBox="0 0 16 16" shape-rendering="crispEdges"><rect width="16" height="16" fill="#fff"/><rect y="0" width="16" height="1" fill="#0000ff"/><rect y="1" width="16" height="1" fill="#c8f4ff"/><rect y="2" width="16" height="2" fill="#0000ff"/><rect y="4" width="16" height="1" fill="#c8f4ff"/><path d="M0 5H5V7H4V8H1V7H0Z" fill="#0000ff"/><path d="M11 5H16V9H15V8H13V6H11Z" fill="#0000ff"/><path d="M1 2H2V5H1ZM4 2H5V4H4ZM2 5H3V6H2ZM12 3H13V4H12ZM3 6H5V7H3Z" fill="#ffff00"/><path d="M10 2H11V4H10ZM14 2H15V3H14ZM5 5H6V6H5Z" fill="#000"/><path d="M0 9H3V10H5V11H8V12H11V11H14V10H16V16H0Z" fill="#008000"/><path d="M0 10H2V11H4V12H7V13H9V14H11V16H10V15H8V14H6V13H3V12H0Z" fill="#20808a"/><path d="M0 14H1V16H0ZM3 14H5V16H3ZM7 14H8V16H7ZM12 14H13V16H12ZM14 13H16V16H14Z" fill="#00ff00"/><rect x="9" y="8" width="3" height="1" fill="#c0c0c0"/></svg>
<div class="a" style="left:41px;top:120px;font-size:12px;line-height:16px;color:#000;white-space:nowrap">AiMei.jwd</div>
<div class="a" style="letter-spacing:0.5px;left:281px;top:120px;font-size:12px;line-height:16px;color:#6d6d6d;white-space:nowrap">2021/8/17 11:35</div>
<div class="a" style="left:425px;top:120px;font-size:12px;line-height:16px;color:#6d6d6d;white-space:nowrap">音乐梦想家简线谱...</div>
<div class="a" style="left:540px;top:120px;width:71px;text-align:right;font-size:12px;line-height:16px;color:#6d6d6d;white-space:nowrap">132 KB</div>
<svg class="a" style="left:21px;top:140px" width="16" height="16" viewBox="0 0 16 16" shape-rendering="crispEdges"><rect width="16" height="16" fill="#fff"/><rect y="0" width="16" height="1" fill="#0000ff"/><rect y="1" width="16" height="1" fill="#c8f4ff"/><rect y="2" width="16" height="2" fill="#0000ff"/><rect y="4" width="16" height="1" fill="#c8f4ff"/><path d="M0 5H5V7H4V8H1V7H0Z" fill="#0000ff"/><path d="M11 5H16V9H15V8H13V6H11Z" fill="#0000ff"/><path d="M1 2H2V5H1ZM4 2H5V4H4ZM2 5H3V6H2ZM12 3H13V4H12ZM3 6H5V7H3Z" fill="#ffff00"/><path d="M10 2H11V4H10ZM14 2H15V3H14ZM5 5H6V6H5Z" fill="#000"/><path d="M0 9H3V10H5V11H8V12H11V11H14V10H16V16H0Z" fill="#008000"/><path d="M0 10H2V11H4V12H7V13H9V14H11V16H10V15H8V14H6V13H3V12H0Z" fill="#20808a"/><path d="M0 14H1V16H0ZM3 14H5V16H3ZM7 14H8V16H7ZM12 14H13V16H12ZM14 13H16V16H14Z" fill="#00ff00"/><rect x="9" y="8" width="3" height="1" fill="#c0c0c0"/></svg>
<div class="a" style="left:41px;top:141px;font-size:12px;line-height:16px;color:#000;white-space:nowrap">aman1i.jpd</div>
<div class="a" style="letter-spacing:0.5px;left:281px;top:141px;font-size:12px;line-height:16px;color:#6d6d6d;white-space:nowrap">2013/5/12 8:34</div>
<div class="a" style="left:425px;top:141px;font-size:12px;line-height:16px;color:#6d6d6d;white-space:nowrap">音乐梦想家简谱文...</div>
<div class="a" style="left:540px;top:141px;width:71px;text-align:right;font-size:12px;line-height:16px;color:#6d6d6d;white-space:nowrap">43 KB</div>
<svg class="a" style="left:21px;top:161px" width="16" height="16" viewBox="0 0 16 16" shape-rendering="crispEdges"><rect width="16" height="16" fill="#fff"/><rect y="0" width="16" height="1" fill="#0000ff"/><rect y="1" width="16" height="1" fill="#c8f4ff"/><rect y="2" width="16" height="2" fill="#0000ff"/><rect y="4" width="16" height="1" fill="#c8f4ff"/><path d="M0 5H5V7H4V8H1V7H0Z" fill="#0000ff"/><path d="M11 5H16V9H15V8H13V6H11Z" fill="#0000ff"/><path d="M1 2H2V5H1ZM4 2H5V4H4ZM2 5H3V6H2ZM12 3H13V4H12ZM3 6H5V7H3Z" fill="#ffff00"/><path d="M10 2H11V4H10ZM14 2H15V3H14ZM5 5H6V6H5Z" fill="#000"/><path d="M0 9H3V10H5V11H8V12H11V11H14V10H16V16H0Z" fill="#008000"/><path d="M0 10H2V11H4V12H7V13H9V14H11V16H10V15H8V14H6V13H3V12H0Z" fill="#20808a"/><path d="M0 14H1V16H0ZM3 14H5V16H3ZM7 14H8V16H7ZM12 14H13V16H12ZM14 13H16V16H14Z" fill="#00ff00"/><rect x="9" y="8" width="3" height="1" fill="#c0c0c0"/></svg>
<div class="a" style="left:41px;top:162px;font-size:12px;line-height:16px;color:#000;white-space:nowrap">HuAn.jjd</div>
<div class="a" style="letter-spacing:0.5px;left:281px;top:162px;font-size:12px;line-height:16px;color:#6d6d6d;white-space:nowrap">2022/6/9 9:46</div>
<div class="a" style="left:425px;top:162px;font-size:12px;line-height:16px;color:#6d6d6d;white-space:nowrap">音乐梦想家吉他类...</div>
<div class="a" style="left:540px;top:162px;width:71px;text-align:right;font-size:12px;line-height:16px;color:#6d6d6d;white-space:nowrap">79 KB</div>
<svg class="a" style="left:21px;top:182px" width="16" height="16" viewBox="0 0 16 16" shape-rendering="crispEdges"><rect width="16" height="16" fill="#fff"/><rect y="0" width="16" height="1" fill="#0000ff"/><rect y="1" width="16" height="1" fill="#c8f4ff"/><rect y="2" width="16" height="2" fill="#0000ff"/><rect y="4" width="16" height="1" fill="#c8f4ff"/><path d="M0 5H5V7H4V8H1V7H0Z" fill="#0000ff"/><path d="M11 5H16V9H15V8H13V6H11Z" fill="#0000ff"/><path d="M1 2H2V5H1ZM4 2H5V4H4ZM2 5H3V6H2ZM12 3H13V4H12ZM3 6H5V7H3Z" fill="#ffff00"/><path d="M10 2H11V4H10ZM14 2H15V3H14ZM5 5H6V6H5Z" fill="#000"/><path d="M0 9H3V10H5V11H8V12H11V11H14V10H16V16H0Z" fill="#008000"/><path d="M0 10H2V11H4V12H7V13H9V14H11V16H10V15H8V14H6V13H3V12H0Z" fill="#20808a"/><path d="M0 14H1V16H0ZM3 14H5V16H3ZM7 14H8V16H7ZM12 14H13V16H12ZM14 13H16V16H14Z" fill="#00ff00"/><rect x="9" y="8" width="3" height="1" fill="#c0c0c0"/></svg>
<div class="a" style="left:41px;top:183px;font-size:12px;line-height:16px;color:#000;white-space:nowrap">HuAn1.jjd</div>
<div class="a" style="letter-spacing:0.5px;left:281px;top:183px;font-size:12px;line-height:16px;color:#6d6d6d;white-space:nowrap">2021/8/17 11:08</div>
<div class="a" style="left:425px;top:183px;font-size:12px;line-height:16px;color:#6d6d6d;white-space:nowrap">音乐梦想家吉他类...</div>
<div class="a" style="left:540px;top:183px;width:71px;text-align:right;font-size:12px;line-height:16px;color:#6d6d6d;white-space:nowrap">78 KB</div>
<svg class="a" style="left:21px;top:203px" width="16" height="16" viewBox="0 0 16 16" shape-rendering="crispEdges"><rect width="16" height="16" fill="#fff"/><rect y="0" width="16" height="1" fill="#0000ff"/><rect y="1" width="16" height="1" fill="#c8f4ff"/><rect y="2" width="16" height="2" fill="#0000ff"/><rect y="4" width="16" height="1" fill="#c8f4ff"/><path d="M0 5H5V7H4V8H1V7H0Z" fill="#0000ff"/><path d="M11 5H16V9H15V8H13V6H11Z" fill="#0000ff"/><path d="M1 2H2V5H1ZM4 2H5V4H4ZM2 5H3V6H2ZM12 3H13V4H12ZM3 6H5V7H3Z" fill="#ffff00"/><path d="M10 2H11V4H10ZM14 2H15V3H14ZM5 5H6V6H5Z" fill="#000"/><path d="M0 9H3V10H5V11H8V12H11V11H14V10H16V16H0Z" fill="#008000"/><path d="M0 10H2V11H4V12H7V13H9V14H11V16H10V15H8V14H6V13H3V12H0Z" fill="#20808a"/><path d="M0 14H1V16H0ZM3 14H5V16H3ZM7 14H8V16H7ZM12 14H13V16H12ZM14 13H16V16H14Z" fill="#00ff00"/><rect x="9" y="8" width="3" height="1" fill="#c0c0c0"/></svg>
<div class="a" style="left:41px;top:204px;font-size:12px;line-height:16px;color:#000;white-space:nowrap">LiuLang.mud</div>
<div class="a" style="letter-spacing:0.5px;left:281px;top:204px;font-size:12px;line-height:16px;color:#6d6d6d;white-space:nowrap">2021/8/16 5:28</div>
<div class="a" style="left:425px;top:204px;font-size:12px;line-height:16px;color:#6d6d6d;white-space:nowrap">音乐梦想家五线谱...</div>
<div class="a" style="left:540px;top:204px;width:71px;text-align:right;font-size:12px;line-height:16px;color:#6d6d6d;white-space:nowrap">78 KB</div>
<svg class="a" style="left:21px;top:224px" width="16" height="16" viewBox="0 0 16 16" shape-rendering="crispEdges"><rect width="16" height="16" fill="#fff"/><rect y="0" width="16" height="1" fill="#0000ff"/><rect y="1" width="16" height="1" fill="#c8f4ff"/><rect y="2" width="16" height="2" fill="#0000ff"/><rect y="4" width="16" height="1" fill="#c8f4ff"/><path d="M0 5H5V7H4V8H1V7H0Z" fill="#0000ff"/><path d="M11 5H16V9H15V8H13V6H11Z" fill="#0000ff"/><path d="M1 2H2V5H1ZM4 2H5V4H4ZM2 5H3V6H2ZM12 3H13V4H12ZM3 6H5V7H3Z" fill="#ffff00"/><path d="M10 2H11V4H10ZM14 2H15V3H14ZM5 5H6V6H5Z" fill="#000"/><path d="M0 9H3V10H5V11H8V12H11V11H14V10H16V16H0Z" fill="#008000"/><path d="M0 10H2V11H4V12H7V13H9V14H11V16H10V15H8V14H6V13H3V12H0Z" fill="#20808a"/><path d="M0 14H1V16H0ZM3 14H5V16H3ZM7 14H8V16H7ZM12 14H13V16H12ZM14 13H16V16H14Z" fill="#00ff00"/><rect x="9" y="8" width="3" height="1" fill="#c0c0c0"/></svg>
<div class="a" style="left:41px;top:225px;font-size:12px;line-height:16px;color:#000;white-space:nowrap">WangQin.jwj</div>
<div class="a" style="letter-spacing:0.5px;left:281px;top:225px;font-size:12px;line-height:16px;color:#6d6d6d;white-space:nowrap">2021/8/17 11:36</div>
<div class="a" style="left:425px;top:225px;font-size:12px;line-height:16px;color:#6d6d6d;white-space:nowrap">音乐梦想家吉他类...</div>
<div class="a" style="left:540px;top:225px;width:71px;text-align:right;font-size:12px;line-height:16px;color:#6d6d6d;white-space:nowrap">79 KB</div>
<svg class="a" style="left:21px;top:245px" width="16" height="16" viewBox="0 0 16 16" shape-rendering="crispEdges"><rect width="16" height="16" fill="#fff"/><rect y="0" width="16" height="1" fill="#0000ff"/><rect y="1" width="16" height="1" fill="#c8f4ff"/><rect y="2" width="16" height="2" fill="#0000ff"/><rect y="4" width="16" height="1" fill="#c8f4ff"/><path d="M0 5H5V7H4V8H1V7H0Z" fill="#0000ff"/><path d="M11 5H16V9H15V8H13V6H11Z" fill="#0000ff"/><path d="M1 2H2V5H1ZM4 2H5V4H4ZM2 5H3V6H2ZM12 3H13V4H12ZM3 6H5V7H3Z" fill="#ffff00"/><path d="M10 2H11V4H10ZM14 2H15V3H14ZM5 5H6V6H5Z" fill="#000"/><path d="M0 9H3V10H5V11H8V12H11V11H14V10H16V16H0Z" fill="#008000"/><path d="M0 10H2V11H4V12H7V13H9V14H11V16H10V15H8V14H6V13H3V12H0Z" fill="#20808a"/><path d="M0 14H1V16H0ZM3 14H5V16H3ZM7 14H8V16H7ZM12 14H13V16H12ZM14 13H16V16H14Z" fill="#00ff00"/><rect x="9" y="8" width="3" height="1" fill="#c0c0c0"/></svg>
<div class="a" style="left:41px;top:246px;font-size:12px;line-height:16px;color:#000;white-space:nowrap">WangQin1.jwj</div>
<div class="a" style="letter-spacing:0.5px;left:281px;top:246px;font-size:12px;line-height:16px;color:#6d6d6d;white-space:nowrap">2021/8/17 11:13</div>
<div class="a" style="left:425px;top:246px;font-size:12px;line-height:16px;color:#6d6d6d;white-space:nowrap">音乐梦想家吉他类...</div>
<div class="a" style="left:540px;top:246px;width:71px;text-align:right;font-size:12px;line-height:16px;color:#6d6d6d;white-space:nowrap">80 KB</div>
<svg class="a" style="left:21px;top:266px" width="16" height="16" viewBox="0 0 16 16" shape-rendering="crispEdges"><rect width="16" height="16" fill="#fff"/><rect y="0" width="16" height="1" fill="#0000ff"/><rect y="1" width="16" height="1" fill="#c8f4ff"/><rect y="2" width="16" height="2" fill="#0000ff"/><rect y="4" width="16" height="1" fill="#c8f4ff"/><path d="M0 5H5V7H4V8H1V7H0Z" fill="#0000ff"/><path d="M11 5H16V9H15V8H13V6H11Z" fill="#0000ff"/><path d="M1 2H2V5H1ZM4 2H5V4H4ZM2 5H3V6H2ZM12 3H13V4H12ZM3 6H5V7H3Z" fill="#ffff00"/><path d="M10 2H11V4H10ZM14 2H15V3H14ZM5 5H6V6H5Z" fill="#000"/><path d="M0 9H3V10H5V11H8V12H11V11H14V10H16V16H0Z" fill="#008000"/><path d="M0 10H2V11H4V12H7V13H9V14H11V16H10V15H8V14H6V13H3V12H0Z" fill="#20808a"/><path d="M0 14H1V16H0ZM3 14H5V16H3ZM7 14H8V16H7ZM12 14H13V16H12ZM14 13H16V16H14Z" fill="#00ff00"/><rect x="9" y="8" width="3" height="1" fill="#c0c0c0"/></svg>
<div class="a" style="left:41px;top:267px;font-size:12px;line-height:16px;color:#000;white-space:nowrap">WenWen.jjd</div>
<div class="a" style="letter-spacing:0.5px;left:281px;top:267px;font-size:12px;line-height:16px;color:#6d6d6d;white-space:nowrap">2021/8/17 11:16</div>
<div class="a" style="left:425px;top:267px;font-size:12px;line-height:16px;color:#6d6d6d;white-space:nowrap">音乐梦想家吉他类...</div>
<div class="a" style="left:540px;top:267px;width:71px;text-align:right;font-size:12px;line-height:16px;color:#6d6d6d;white-space:nowrap">45 KB</div>
<svg class="a" style="left:21px;top:287px" width="16" height="16" viewBox="0 0 16 16" shape-rendering="crispEdges"><rect width="16" height="16" fill="#fff"/><rect y="0" width="16" height="1" fill="#0000ff"/><rect y="1" width="16" height="1" fill="#c8f4ff"/><rect y="2" width="16" height="2" fill="#0000ff"/><rect y="4" width="16" height="1" fill="#c8f4ff"/><path d="M0 5H5V7H4V8H1V7H0Z" fill="#0000ff"/><path d="M11 5H16V9H15V8H13V6H11Z" fill="#0000ff"/><path d="M1 2H2V5H1ZM4 2H5V4H4ZM2 5H3V6H2ZM12 3H13V4H12ZM3 6H5V7H3Z" fill="#ffff00"/><path d="M10 2H11V4H10ZM14 2H15V3H14ZM5 5H6V6H5Z" fill="#000"/><path d="M0 9H3V10H5V11H8V12H11V11H14V10H16V16H0Z" fill="#008000"/><path d="M0 10H2V11H4V12H7V13H9V14H11V16H10V15H8V14H6V13H3V12H0Z" fill="#20808a"/><path d="M0 14H1V16H0ZM3 14H5V16H3ZM7 14H8V16H7ZM12 14H13V16H12ZM14 13H16V16H14Z" fill="#00ff00"/><rect x="9" y="8" width="3" height="1" fill="#c0c0c0"/></svg>
<div class="a" style="left:41px;top:288px;font-size:12px;line-height:16px;color:#000;white-space:nowrap">WoZi.jwd</div>
<div class="a" style="letter-spacing:0.5px;left:281px;top:288px;font-size:12px;line-height:16px;color:#6d6d6d;white-space:nowrap">2021/8/17 11:19</div>
<div class="a" style="left:425px;top:288px;font-size:12px;line-height:16px;color:#6d6d6d;white-space:nowrap">音乐梦想家简线谱...</div>
<div class="a" style="left:540px;top:288px;width:71px;text-align:right;font-size:12px;line-height:16px;color:#6d6d6d;white-space:nowrap">110 KB</div>
<svg class="a" style="left:21px;top:308px" width="16" height="16" viewBox="0 0 16 16" shape-rendering="crispEdges"><rect width="16" height="16" fill="#fff"/><rect y="0" width="16" height="1" fill="#0000ff"/><rect y="1" width="16" height="1" fill="#c8f4ff"/><rect y="2" width="16" height="2" fill="#0000ff"/><rect y="4" width="16" height="1" fill="#c8f4ff"/><path d="M0 5H5V7H4V8H1V7H0Z" fill="#0000ff"/><path d="M11 5H16V9H15V8H13V6H11Z" fill="#0000ff"/><path d="M1 2H2V5H1ZM4 2H5V4H4ZM2 5H3V6H2ZM12 3H13V4H12ZM3 6H5V7H3Z" fill="#ffff00"/><path d="M10 2H11V4H10ZM14 2H15V3H14ZM5 5H6V6H5Z" fill="#000"/><path d="M0 9H3V10H5V11H8V12H11V11H14V10H16V16H0Z" fill="#008000"/><path d="M0 10H2V11H4V12H7V13H9V14H11V16H10V15H8V14H6V13H3V12H0Z" fill="#20808a"/><path d="M0 14H1V16H0ZM3 14H5V16H3ZM7 14H8V16H7ZM12 14H13V16H12ZM14 13H16V16H14Z" fill="#00ff00"/><rect x="9" y="8" width="3" height="1" fill="#c0c0c0"/></svg>
<div class="a" style="left:41px;top:309px;font-size:12px;line-height:16px;color:#000;white-space:nowrap">WuKong.mud</div>
<div class="a" style="letter-spacing:0.5px;left:281px;top:309px;font-size:12px;line-height:16px;color:#6d6d6d;white-space:nowrap">2021/8/17 11:22</div>
<div class="a" style="left:425px;top:309px;font-size:12px;line-height:16px;color:#6d6d6d;white-space:nowrap">音乐梦想家五线谱...</div>
<div class="a" style="left:540px;top:309px;width:71px;text-align:right;font-size:12px;line-height:16px;color:#6d6d6d;white-space:nowrap">38 KB</div>
<svg class="a" style="left:21px;top:329px" width="16" height="16" viewBox="0 0 16 16" shape-rendering="crispEdges"><rect width="16" height="16" fill="#fff"/><rect y="0" width="16" height="1" fill="#0000ff"/><rect y="1" width="16" height="1" fill="#c8f4ff"/><rect y="2" width="16" height="2" fill="#0000ff"/><rect y="4" width="16" height="1" fill="#c8f4ff"/><path d="M0 5H5V7H4V8H1V7H0Z" fill="#0000ff"/><path d="M11 5H16V9H15V8H13V6H11Z" fill="#0000ff"/><path d="M1 2H2V5H1ZM4 2H5V4H4ZM2 5H3V6H2ZM12 3H13V4H12ZM3 6H5V7H3Z" fill="#ffff00"/><path d="M10 2H11V4H10ZM14 2H15V3H14ZM5 5H6V6H5Z" fill="#000"/><path d="M0 9H3V10H5V11H8V12H11V11H14V10H16V16H0Z" fill="#008000"/><path d="M0 10H2V11H4V12H7V13H9V14H11V16H10V15H8V14H6V13H3V12H0Z" fill="#20808a"/><path d="M0 14H1V16H0ZM3 14H5V16H3ZM7 14H8V16H7ZM12 14H13V16H12ZM14 13H16V16H14Z" fill="#00ff00"/><rect x="9" y="8" width="3" height="1" fill="#c0c0c0"/></svg>
<div class="a" style="left:41px;top:330px;font-size:12px;line-height:16px;color:#000;white-space:nowrap">XiaoXin.jpd</div>
<div class="a" style="letter-spacing:0.5px;left:281px;top:330px;font-size:12px;line-height:16px;color:#6d6d6d;white-space:nowrap">2021/8/17 11:26</div>
<div class="a" style="left:425px;top:330px;font-size:12px;line-height:16px;color:#6d6d6d;white-space:nowrap">音乐梦想家简谱文...</div>
<div class="a" style="left:540px;top:330px;width:71px;text-align:right;font-size:12px;line-height:16px;color:#6d6d6d;white-space:nowrap">24 KB</div>
</div>
<div class="a" style="left:936px;top:120px;width:16px;height:346px;background:#f0f0f0"></div>
<svg class="a" style="left:938px;top:124px" width="11" height="8" viewBox="0 0 11 8"><path d="M1.5 6L5.5 2L9.5 6" stroke="#606060" stroke-width="1.6" fill="none"/></svg>
<div class="a" style="left:937px;top:137px;width:14px;height:66px;background:#cdcdcd"></div>
<svg class="a" style="left:938px;top:453px" width="11" height="8" viewBox="0 0 11 8"><path d="M1.5 2L5.5 6L9.5 2" stroke="#606060" stroke-width="1.6" fill="none"/></svg>
<div class="a" style="left:8px;top:120px;width:140px;height:346px;background:#fff;overflow:hidden">
<div class="a" style="left:0;top:328px;width:140px;height:20px;background:#d9d9d9"></div>
<div class="a folder" style="left:34px;top:3px"></div>
<div class="a" style="left:53px;top:4px;font-size:12px;line-height:16px;color:#000;white-space:nowrap">我的云图片</div>
<svg class="a" style="left:33px;top:27px" width="16" height="16" viewBox="0 0 16 16"><rect x="0" y="2" width="6" height="6" rx="1" fill="#2e8ff0"/><rect x="8.5" y="0.5" width="6" height="6" rx="1" transform="rotate(45 11.5 3.5)" fill="#2e8ff0"/><rect x="0" y="10" width="6" height="6" rx="1" fill="#2e8ff0"/><rect x="8" y="10" width="6" height="6" rx="1" fill="#2e8ff0"/></svg>
<div class="a" style="left:53px;top:28px;font-size:12px;line-height:16px;color:#000;white-space:nowrap">应用</div>
<svg class="a" style="left:24px;top:59px" width="17" height="16" viewBox="0 0 17 16"><path d="M3 13Q0 13 0 10.5Q0 8 3 8Q4 4 8 4Q12 4 12.5 7.5Q16.5 7.5 16.5 10.5Q16.5 13 13.5 13Z" fill="#1a73e0"/></svg>
<div class="a" style="left:45px;top:60px;font-size:12px;line-height:16px;color:#000;white-space:nowrap">OneDrive</div>
<svg class="a" style="left:24px;top:91px" width="17" height="16" viewBox="0 0 17 16"><rect x="0.5" y="1.5" width="16" height="10" fill="#3aa0e8" stroke="#5a6a7a"/><rect x="5" y="13" width="7" height="1.5" fill="#8a9aaa"/><rect x="2" y="14.5" width="13" height="1" fill="#8a9aaa"/></svg>
<div class="a" style="left:45px;top:92px;font-size:12px;line-height:16px;color:#000;white-space:nowrap">此电脑</div>
<svg class="a" style="left:32px;top:115px" width="16" height="16" viewBox="0 0 16 16"><path d="M8 0L15 3.5V12L8 16L1 12V3.5Z" fill="#5ed0e8"/><path d="M8 7L15 3.5V12L8 16Z" fill="#2aa6c8"/><path d="M8 0L15 3.5L8 7L1 3.5Z" fill="#b8f0fa"/></svg>
<div class="a" style="left:53px;top:116px;font-size:12px;line-height:16px;color:#000;white-space:nowrap">3D 对象</div>
<svg class="a" style="left:33px;top:139px" width="16" height="16" viewBox="0 0 16 16"><rect x="1" y="0" width="14" height="16" fill="#404a58"/><rect x="4" y="2" width="8" height="5" fill="#e8a020"/><rect x="4" y="9" width="8" height="5" fill="#3a8ad8"/><rect x="1.5" y="1" width="1.5" height="1.5" fill="#ccc"/><rect x="1.5" y="5" width="1.5" height="1.5" fill="#ccc"/><rect x="1.5" y="9" width="1.5" height="1.5" fill="#ccc"/><rect x="1.5" y="13" width="1.5" height="1.5" fill="#ccc"/><rect x="13" y="1" width="1.5" height="1.5" fill="#ccc"/><rect x="13" y="5" width="1.5" height="1.5" fill="#ccc"/><rect x="13" y="9" width="1.5" height="1.5" fill="#ccc"/><rect x="13" y="13" width="1.5" height="1.5" fill="#ccc"/></svg>
<div class="a" style="left:53px;top:140px;font-size:12px;line-height:16px;color:#000;white-space:nowrap">视频</div>
<svg class="a" style="left:32px;top:163px" width="16" height="16" viewBox="0 0 16 16"><rect x="0.5" y="2.5" width="15" height="11" fill="#fff" stroke="#8a8a8a"/><rect x="2" y="4" width="12" height="8" fill="#6aa8d8"/><path d="M2 12L6 8L9 10L14 7V12Z" fill="#4a7a4a"/></svg>
<div class="a" style="left:53px;top:164px;font-size:12px;line-height:16px;color:#000;white-space:nowrap">图片</div>
<svg class="a" style="left:33px;top:187px" width="16" height="16" viewBox="0 0 16 16"><path d="M2.5 0.5H10L13.5 4V15.5H2.5Z" fill="#fff" stroke="#8a8a8a"/><path d="M5 6H11M5 8H11M5 10H11M5 12H11" stroke="#6a8ac8" stroke-width="1"/></svg>
<div class="a" style="left:53px;top:188px;font-size:12px;line-height:16px;color:#000;white-space:nowrap">文档</div>
<svg class="a" style="left:33px;top:211px" width="16" height="16" viewBox="0 0 16 16"><path d="M5.5 0H10.5V8H15L8 15.5L1 8H5.5Z" fill="#2e7fd8"/></svg>
<div class="a" style="left:53px;top:212px;font-size:12px;line-height:16px;color:#000;white-space:nowrap">下载</div>
<svg class="a" style="left:33px;top:235px" width="16" height="16" viewBox="0 0 16 16"><path d="M7 1V12" stroke="#2e8fe0" stroke-width="2"/><ellipse cx="5" cy="12.5" rx="3" ry="2.5" fill="#2e8fe0"/><path d="M7 1Q12 4 11 9Q10 5 7 4.5Z" fill="#2e8fe0"/></svg>
<div class="a" style="left:53px;top:236px;font-size:12px;line-height:16px;color:#000;white-space:nowrap">音乐</div>
<svg class="a" style="left:32px;top:259px" width="17" height="16" viewBox="0 0 17 16"><rect x="0.5" y="2" width="16" height="11" fill="#1f8ae0" stroke="#1a5a9a"/></svg>
<div class="a" style="left:53px;top:260px;font-size:12px;line-height:16px;color:#000;white-space:nowrap">桌面</div>
<svg class="a" style="left:32px;top:283px" width="16" height="16" viewBox="0 0 16 16"><rect x="1" y="9" width="14" height="5" rx="1" fill="#3a3a3a"/><rect x="1" y="8" width="14" height="2" fill="#d8d8d8"/><rect x="12" y="11" width="1.5" height="1.5" fill="#3f3"/><rect x="1" y="1" width="3" height="3" fill="#1e90ff"/><rect x="4.5" y="1" width="3" height="3" fill="#1e90ff"/><rect x="1" y="4.5" width="3" height="3" fill="#1e90ff"/><rect x="4.5" y="4.5" width="3" height="3" fill="#1e90ff"/></svg>
<div class="a" style="left:53px;top:284px;font-size:12px;line-height:16px;color:#000;white-space:nowrap">系统 (C:)</div>
<svg class="a" style="left:32px;top:307px" width="16" height="16" viewBox="0 0 16 16"><rect x="1" y="9" width="14" height="5" rx="1" fill="#3a3a3a"/><rect x="1" y="7.5" width="14" height="2.5" fill="#e0e0e0"/><rect x="12" y="11" width="1.5" height="1.5" fill="#3f3"/></svg>
<div class="a" style="left:53px;top:308px;font-size:12px;line-height:16px;color:#000;white-space:nowrap">系统 (D:)</div>
<svg class="a" style="left:32px;top:331px" width="16" height="16" viewBox="0 0 16 16"><rect x="1" y="9" width="14" height="5" rx="1" fill="#3a3a3a"/><rect x="1" y="7.5" width="14" height="2.5" fill="#e0e0e0"/><rect x="12" y="11" width="1.5" height="1.5" fill="#3f3"/></svg>
<div class="a" style="left:53px;top:332px;font-size:12px;line-height:16px;color:#000;white-space:nowrap">软件 (E:)</div>
</div>
<div class="a" style="left:148px;top:120px;width:16px;height:346px;background:#f0f0f0"></div>
<svg class="a" style="left:150px;top:124px" width="11" height="8" viewBox="0 0 11 8"><path d="M1.5 6L5.5 2L9.5 6" stroke="#606060" stroke-width="1.6" fill="none"/></svg>
<div class="a" style="left:149px;top:281px;width:14px;height:138px;background:#cdcdcd"></div>
<svg class="a" style="left:150px;top:453px" width="11" height="8" viewBox="0 0 11 8"><path d="M1.5 2L5.5 6L9.5 2" stroke="#606060" stroke-width="1.6" fill="none"/></svg>
<div class="a" style="left:8px;top:466px;width:944px;height:80px;background:#f0f0f0"></div>
<div class="a" style="left:138px;top:482px;font-size:12px;line-height:16px;color:#000;white-space:nowrap">文件名(<u>N</u>):</div>
<div class="a" style="left:200px;top:477px;width:535px;height:26px;border:1px solid #0078d7;background:#fff"></div>
<div class="a" style="left:204px;top:482px;width:83px;height:17px;background:#0078d7"></div><div class="a" style="left:287px;top:482px;width:1px;height:17px;background:#000"></div>
<div class="a" style="left:205px;top:483px;font-size:12px;line-height:16px;color:#fff;white-space:nowrap;letter-spacing:0.3px">*.mjw;*.jjd;*.jwj</div>
<svg class="a" style="left:720px;top:486px" width="11" height="8" viewBox="0 0 11 8"><path d="M1 1.5L5.5 6L10 1.5" stroke="#404040" stroke-width="1.1" fill="none"/></svg>
<div class="a" style="left:747px;top:477px;width:188px;height:26px;border:1px solid #adadad;background:#e5e5e5"></div>
<div class="a" style="left:751px;top:482px;font-size:12px;line-height:16px;color:#000;white-space:nowrap">音乐梦想家文件(*.jpd;*.jpc;*.m</div>
<svg class="a" style="left:920px;top:486px" width="11" height="8" viewBox="0 0 11 8"><path d="M1 1.5L5.5 6L10 1.5" stroke="#404040" stroke-width="1.1" fill="none"/></svg>
<div class="a" style="left:748px;top:509px;width:86px;height:24px;border:2px solid #0078d7;background:#e1e1e1"></div>
<div class="a" style="left:760px;top:513px;font-size:12px;line-height:16px;color:#000;white-space:nowrap">打开(<u>O</u>)</div>
<div class="a" style="left:817px;top:512px;width:1px;height:18px;background:#404040"></div>
<svg class="a" style="left:820px;top:518px" width="11" height="6" viewBox="0 0 11 6"><path d="M0 0H11L5.5 6Z" fill="#000"/></svg>
<div class="a" style="left:848px;top:509px;width:86px;height:24px;border:1px solid #adadad;background:#e1e1e1"></div>
<div class="a" style="left:848px;top:513px;width:86px;text-align:center;font-size:12px;line-height:16px;color:#000">取消</div>
<svg class="a" style="left:940px;top:535px" width="9" height="9" viewBox="0 0 9 9"><g fill="#b0b0b0"><rect x="6" y="0" width="2" height="2"/><rect x="3" y="3" width="2" height="2"/><rect x="6" y="3" width="2" height="2"/><rect x="0" y="6" width="2" height="2"/><rect x="3" y="6" width="2" height="2"/><rect x="6" y="6" width="2" height="2"/></g></svg>
<!--DLGBODY-->


</body></html>
